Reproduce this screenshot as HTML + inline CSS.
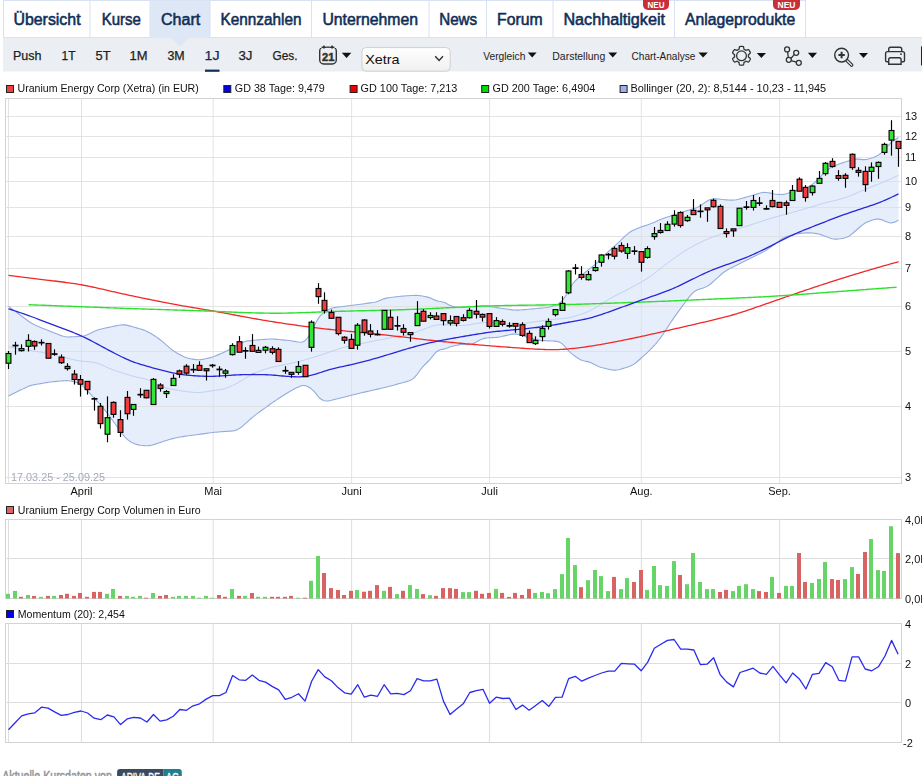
<!DOCTYPE html>
<html><head><meta charset="utf-8"><style>
html,body{margin:0;padding:0;width:922px;height:776px;overflow:hidden;background:#fff;position:relative}
svg{display:block;position:absolute;left:0;top:0;font-family:"Liberation Sans",sans-serif}
#ch{will-change:transform}
</style></head><body>
<svg width="922" height="776" viewBox="0 0 922 776">
<rect x="3" y="0" width="803" height="38" fill="#fff"/>
<line x1="90" y1="0" x2="90" y2="37" stroke="#d8e2f2" stroke-width="1"/>
<line x1="150" y1="0" x2="150" y2="37" stroke="#d8e2f2" stroke-width="1"/>
<rect x="150" y="0" width="60" height="37" fill="#dde7f6"/>
<line x1="210" y1="0" x2="210" y2="37" stroke="#d8e2f2" stroke-width="1"/>
<line x1="311.5" y1="0" x2="311.5" y2="37" stroke="#d8e2f2" stroke-width="1"/>
<line x1="429" y1="0" x2="429" y2="37" stroke="#d8e2f2" stroke-width="1"/>
<line x1="486.5" y1="0" x2="486.5" y2="37" stroke="#d8e2f2" stroke-width="1"/>
<line x1="553" y1="0" x2="553" y2="37" stroke="#d8e2f2" stroke-width="1"/>
<line x1="674.5" y1="0" x2="674.5" y2="37" stroke="#d8e2f2" stroke-width="1"/>
<line x1="805.5" y1="0" x2="805.5" y2="37" stroke="#d8e2f2" stroke-width="1"/>
<line x1="3.5" y1="0" x2="3.5" y2="37" stroke="#d8e2f2" stroke-width="1"/>
<line x1="3" y1="0.5" x2="806" y2="0.5" stroke="#d8e2f2" stroke-width="1"/>
<text x="13.40" y="24.70" font-size="16" font-weight="normal" fill="#0f2e57" text-anchor="start" textLength="67.20" lengthAdjust="spacingAndGlyphs" stroke="#0f2e57" stroke-width="0.55">Übersicht</text>
<text x="101.70" y="24.70" font-size="16" font-weight="normal" fill="#0f2e57" text-anchor="start" textLength="39.10" lengthAdjust="spacingAndGlyphs" stroke="#0f2e57" stroke-width="0.55">Kurse</text>
<text x="161.00" y="24.70" font-size="16" font-weight="normal" fill="#0f2e57" text-anchor="start" textLength="39.20" lengthAdjust="spacingAndGlyphs" stroke="#0f2e57" stroke-width="0.55">Chart</text>
<text x="220.60" y="24.70" font-size="16" font-weight="normal" fill="#0f2e57" text-anchor="start" textLength="80.90" lengthAdjust="spacingAndGlyphs" stroke="#0f2e57" stroke-width="0.55">Kennzahlen</text>
<text x="322.40" y="24.70" font-size="16" font-weight="normal" fill="#0f2e57" text-anchor="start" textLength="95.60" lengthAdjust="spacingAndGlyphs" stroke="#0f2e57" stroke-width="0.55">Unternehmen</text>
<text x="439.20" y="24.70" font-size="16" font-weight="normal" fill="#0f2e57" text-anchor="start" textLength="38.00" lengthAdjust="spacingAndGlyphs" stroke="#0f2e57" stroke-width="0.55">News</text>
<text x="497.10" y="24.70" font-size="16" font-weight="normal" fill="#0f2e57" text-anchor="start" textLength="45.50" lengthAdjust="spacingAndGlyphs" stroke="#0f2e57" stroke-width="0.55">Forum</text>
<text x="563.40" y="24.70" font-size="16" font-weight="normal" fill="#0f2e57" text-anchor="start" textLength="101.60" lengthAdjust="spacingAndGlyphs" stroke="#0f2e57" stroke-width="0.55">Nachhaltigkeit</text>
<text x="685.00" y="24.70" font-size="16" font-weight="normal" fill="#0f2e57" text-anchor="start" textLength="110.20" lengthAdjust="spacingAndGlyphs" stroke="#0f2e57" stroke-width="0.55">Anlageprodukte</text>
<path d="M643 0 H669 V5 A5 5 0 0 1 664 10 H648 A5 5 0 0 1 643 5 Z" fill="#c92f3a"/>
<text x="656.00" y="7.60" font-size="9" font-weight="bold" fill="#fff" text-anchor="middle" textLength="17.00" lengthAdjust="spacingAndGlyphs">NEU</text>
<path d="M773 0 H800 V5 A5 5 0 0 1 795 10 H778 A5 5 0 0 1 773 5 Z" fill="#c92f3a"/>
<text x="786.50" y="7.60" font-size="9" font-weight="bold" fill="#fff" text-anchor="middle" textLength="18.00" lengthAdjust="spacingAndGlyphs">NEU</text>
<rect x="3" y="37" width="919" height="34.5" fill="#ebeef2"/>
<line x1="3" y1="37.5" x2="922" y2="37.5" stroke="#d8e2f2" stroke-width="1"/>
<rect x="150.5" y="37" width="59" height="1" fill="#dde7f6"/>
<polygon points="171,37.5 189,37.5 180,46.5" fill="#dde7f6"/>
<text x="12.90" y="59.80" font-size="12.8" font-weight="normal" fill="#1d1d1d" text-anchor="start" textLength="28.60" lengthAdjust="spacingAndGlyphs" stroke="#1d1d1d" stroke-width="0.25">Push</text>
<text x="61.50" y="59.80" font-size="12.8" font-weight="normal" fill="#1d1d1d" text-anchor="start" textLength="14.00" lengthAdjust="spacingAndGlyphs" stroke="#1d1d1d" stroke-width="0.25">1T</text>
<text x="95.50" y="59.80" font-size="12.8" font-weight="normal" fill="#1d1d1d" text-anchor="start" textLength="15.00" lengthAdjust="spacingAndGlyphs" stroke="#1d1d1d" stroke-width="0.25">5T</text>
<text x="129.50" y="59.80" font-size="12.8" font-weight="normal" fill="#1d1d1d" text-anchor="start" textLength="18.00" lengthAdjust="spacingAndGlyphs" stroke="#1d1d1d" stroke-width="0.25">1M</text>
<text x="167.40" y="59.80" font-size="12.8" font-weight="normal" fill="#1d1d1d" text-anchor="start" textLength="17.30" lengthAdjust="spacingAndGlyphs" stroke="#1d1d1d" stroke-width="0.25">3M</text>
<text x="204.50" y="59.80" font-size="12.8" font-weight="normal" fill="#0f2e57" text-anchor="start" textLength="15.00" lengthAdjust="spacingAndGlyphs" stroke="#0f2e57" stroke-width="0.25">1J</text>
<text x="238.50" y="59.80" font-size="12.8" font-weight="normal" fill="#1d1d1d" text-anchor="start" textLength="14.00" lengthAdjust="spacingAndGlyphs" stroke="#1d1d1d" stroke-width="0.25">3J</text>
<text x="272.50" y="59.80" font-size="12.8" font-weight="normal" fill="#1d1d1d" text-anchor="start" textLength="25.00" lengthAdjust="spacingAndGlyphs" stroke="#1d1d1d" stroke-width="0.25">Ges.</text>
<rect x="205" y="69.6" width="14.5" height="2.2" fill="#0f2e57"/>
<rect x="319.7" y="47" width="16.6" height="17" rx="4" fill="none" stroke="#333" stroke-width="1.4"/>
<rect x="319" y="45" width="18" height="3" fill="#ebeef2"/>
<path d="M321.5 47.3 H334.5" stroke="#333" stroke-width="1.4" fill="none"/>
<rect x="323" y="45.6" width="1.8" height="3" rx="0.6" fill="#333"/>
<rect x="331.2" y="45.6" width="1.8" height="3" rx="0.6" fill="#333"/>
<rect x="326" y="46.6" width="4" height="1.4" fill="#ebeef2"/>
<path d="M326.2 47.3 H329.8" stroke="#333" stroke-width="1.2"/>
<text x="328.20" y="60.80" font-size="11" font-weight="bold" fill="#333" text-anchor="middle" textLength="12.40" lengthAdjust="spacingAndGlyphs" stroke="#333" stroke-width="0.5">21</text>
<polygon points="341.8,52.8 351.3,52.8 346.55,58" fill="#111"/>
<defs><linearGradient id="sg" x1="0" y1="0" x2="0" y2="1"><stop offset="0" stop-color="#ffffff"/><stop offset="1" stop-color="#f0f0f0"/></linearGradient></defs>
<rect x="361.9" y="47.6" width="88.3" height="23.6" rx="4" fill="url(#sg)" stroke="#cfcfcf" stroke-width="1"/>
<text x="365.20" y="63.70" font-size="13.6" font-weight="normal" fill="#111" text-anchor="start" textLength="34.40" lengthAdjust="spacingAndGlyphs">Xetra</text>
<path d="M435.2 56.3 L439.1 60.4 L443 56.3" fill="none" stroke="#333" stroke-width="1.5"/>
<text x="483.20" y="59.50" font-size="11.8" font-weight="normal" fill="#1d1d1d" text-anchor="start" textLength="42.20" lengthAdjust="spacingAndGlyphs">Vergleich</text>
<polygon points="527.8,52.4 536.6,52.4 532.2,57.6" fill="#111"/>
<text x="552.30" y="59.50" font-size="11.8" font-weight="normal" fill="#1d1d1d" text-anchor="start" textLength="52.90" lengthAdjust="spacingAndGlyphs">Darstellung</text>
<polygon points="608.3,52.4 617.2,52.4 612.75,57.6" fill="#111"/>
<text x="631.50" y="59.50" font-size="11.8" font-weight="normal" fill="#1d1d1d" text-anchor="start" textLength="63.90" lengthAdjust="spacingAndGlyphs">Chart-Analyse</text>
<polygon points="698.4,52.4 707.8,52.4 703.0999999999999,57.6" fill="#111"/>
<path d="M741.50 46.40 L741.75 46.40 L741.99 46.41 L742.24 46.43 L742.48 46.45 L742.73 46.48 L742.97 46.52 L743.21 46.56 L743.44 46.69 L743.58 47.13 L743.70 47.59 L743.80 48.05 L743.87 48.49 L743.94 48.92 L744.01 49.26 L744.18 49.33 L744.35 49.41 L744.51 49.48 L744.68 49.56 L744.84 49.65 L745.00 49.74 L745.16 49.83 L745.31 49.93 L745.46 50.03 L745.61 50.14 L745.76 50.25 L745.91 50.36 L746.24 50.25 L746.64 50.09 L747.07 49.93 L747.51 49.79 L747.97 49.66 L748.42 49.57 L748.65 49.70 L748.81 49.88 L748.96 50.08 L749.10 50.27 L749.25 50.48 L749.38 50.68 L749.51 50.89 L749.64 51.10 L749.76 51.31 L749.88 51.53 L749.98 51.75 L750.09 51.98 L750.18 52.20 L750.28 52.43 L750.36 52.66 L750.36 52.92 L750.05 53.27 L749.71 53.60 L749.36 53.91 L749.02 54.20 L748.68 54.47 L748.41 54.70 L748.44 54.89 L748.46 55.07 L748.48 55.25 L748.49 55.43 L748.50 55.62 L748.50 55.80 L748.50 55.98 L748.49 56.17 L748.48 56.35 L748.46 56.53 L748.44 56.71 L748.41 56.90 L748.68 57.13 L749.02 57.40 L749.36 57.69 L749.71 58.00 L750.05 58.33 L750.36 58.68 L750.36 58.94 L750.28 59.17 L750.18 59.40 L750.09 59.62 L749.98 59.85 L749.88 60.07 L749.76 60.29 L749.64 60.50 L749.51 60.71 L749.38 60.92 L749.25 61.12 L749.10 61.33 L748.96 61.52 L748.81 61.72 L748.65 61.90 L748.42 62.03 L747.97 61.94 L747.51 61.81 L747.07 61.67 L746.64 61.51 L746.24 61.35 L745.91 61.24 L745.76 61.35 L745.61 61.46 L745.46 61.57 L745.31 61.67 L745.16 61.77 L745.00 61.86 L744.84 61.95 L744.68 62.04 L744.51 62.12 L744.35 62.19 L744.18 62.27 L744.01 62.34 L743.94 62.68 L743.87 63.11 L743.80 63.55 L743.70 64.01 L743.58 64.47 L743.44 64.91 L743.21 65.04 L742.97 65.08 L742.73 65.12 L742.48 65.15 L742.24 65.17 L741.99 65.19 L741.75 65.20 L741.50 65.20 L741.25 65.20 L741.01 65.19 L740.76 65.17 L740.52 65.15 L740.27 65.12 L740.03 65.08 L739.79 65.04 L739.56 64.91 L739.42 64.47 L739.30 64.01 L739.20 63.55 L739.13 63.11 L739.06 62.68 L738.99 62.34 L738.82 62.27 L738.65 62.19 L738.49 62.12 L738.32 62.04 L738.16 61.95 L738.00 61.86 L737.84 61.77 L737.69 61.67 L737.54 61.57 L737.39 61.46 L737.24 61.35 L737.09 61.24 L736.76 61.35 L736.36 61.51 L735.93 61.67 L735.49 61.81 L735.03 61.94 L734.58 62.03 L734.35 61.90 L734.19 61.72 L734.04 61.52 L733.90 61.33 L733.75 61.12 L733.62 60.92 L733.49 60.71 L733.36 60.50 L733.24 60.29 L733.12 60.07 L733.02 59.85 L732.91 59.62 L732.82 59.40 L732.72 59.17 L732.64 58.94 L732.64 58.68 L732.95 58.33 L733.29 58.00 L733.64 57.69 L733.98 57.40 L734.32 57.13 L734.59 56.90 L734.56 56.71 L734.54 56.53 L734.52 56.35 L734.51 56.17 L734.50 55.98 L734.50 55.80 L734.50 55.62 L734.51 55.43 L734.52 55.25 L734.54 55.07 L734.56 54.89 L734.59 54.70 L734.32 54.47 L733.98 54.20 L733.64 53.91 L733.29 53.60 L732.95 53.27 L732.64 52.92 L732.64 52.66 L732.72 52.43 L732.82 52.20 L732.91 51.98 L733.02 51.75 L733.12 51.53 L733.24 51.31 L733.36 51.10 L733.49 50.89 L733.62 50.68 L733.75 50.48 L733.90 50.27 L734.04 50.08 L734.19 49.88 L734.35 49.70 L734.58 49.57 L735.03 49.66 L735.49 49.79 L735.93 49.93 L736.36 50.09 L736.76 50.25 L737.09 50.36 L737.24 50.25 L737.39 50.14 L737.54 50.03 L737.69 49.93 L737.84 49.83 L738.00 49.74 L738.16 49.65 L738.32 49.56 L738.49 49.48 L738.65 49.41 L738.82 49.33 L738.99 49.26 L739.06 48.92 L739.13 48.49 L739.20 48.05 L739.30 47.59 L739.42 47.13 L739.56 46.69 L739.79 46.56 L740.03 46.52 L740.27 46.48 L740.52 46.45 L740.76 46.43 L741.01 46.41 L741.25 46.40 L741.50 46.40Z" fill="none" stroke="#333" stroke-width="1.3" stroke-linejoin="round"/>
<circle cx="741.5" cy="55.8" r="4.9" fill="none" stroke="#333" stroke-width="1.3"/>
<polygon points="756.8,52.9 766,52.9 761.4,58" fill="#111"/>
<circle cx="787.1" cy="49.4" r="2.5" fill="none" stroke="#333" stroke-width="1.3"/>
<circle cx="796.2" cy="52.8" r="2.5" fill="none" stroke="#333" stroke-width="1.3"/>
<circle cx="788.8" cy="59.8" r="2.5" fill="none" stroke="#333" stroke-width="1.3"/>
<circle cx="798.8" cy="62.8" r="2.5" fill="none" stroke="#333" stroke-width="1.3"/>
<path d="M787.6 51.9 L788.3 57.3 M790.9 58.5 L794.2 54.6 M791.2 60.6 L796.4 62.1" stroke="#333" stroke-width="1.3" fill="none"/>
<polygon points="807.9,52.8 817,52.8 812.45,58" fill="#111"/>
<circle cx="841.6" cy="55.1" r="6.9" fill="none" stroke="#333" stroke-width="1.4"/>
<path d="M838.4 55 H844.8 M841.6 51.8 V58.2" stroke="#333" stroke-width="2"/>
<path d="M847.2 60.8 L851.6 65" stroke="#333" stroke-width="3.6" stroke-linecap="round"/>
<path d="M847.2 60.8 L851.6 65" stroke="#ebeef2" stroke-width="1.2" stroke-linecap="round"/>
<polygon points="859,53 868,53 863.5,57.9" fill="#111"/>
<path d="M888.7 51.4 V49.2 Q888.7 47.3 890.6 47.3 H899.8 Q901.7 47.3 901.7 49.2 V51.4" fill="none" stroke="#333" stroke-width="1.4"/>
<path d="M888.3 61.8 H886.9 Q885.6 61.8 885.6 60.4 V53.6 Q885.6 51.6 887.6 51.6 H902.6 Q904.5 51.6 904.5 53.6 V60.4 Q904.5 61.8 903.2 61.8 H901.5" fill="none" stroke="#333" stroke-width="1.4"/>
<path d="M888.7 64.2 V59.6 Q888.7 57.7 890.6 57.7 H899.2 Q901.1 57.7 901.1 59.6 V64.2 H888.7 Z" fill="none" stroke="#333" stroke-width="1.4"/>
<circle cx="901" cy="54.2" r="0.9" fill="#333"/>
<rect x="921" y="46.4" width="1" height="19" fill="#222"/>
<text x="2.20" y="781.20" font-size="14" font-weight="normal" fill="#8f9499" text-anchor="start" textLength="109.80" lengthAdjust="spacingAndGlyphs" stroke="#8f9499" stroke-width="0.5">Aktuelle Kursdaten von</text>
<path d="M117.1 776 V772 Q117.1 769.1 120 769.1 H163.6 V776 Z" fill="#3b4b5f"/>
<path d="M163.6 776 V769.1 H178.9 Q181.8 769.1 181.8 772 V776 Z" fill="#1f7f8c"/>
<text x="121.00" y="782.00" font-size="12.5" font-weight="normal" fill="#fff" text-anchor="start" textLength="39.00" lengthAdjust="spacingAndGlyphs" stroke="#fff" stroke-width="0.4">ARIVA.DE</text>
<text x="166.00" y="782.00" font-size="12.5" font-weight="normal" fill="#fff" text-anchor="start" textLength="13.00" lengthAdjust="spacingAndGlyphs" stroke="#fff" stroke-width="0.4">AG</text>
</svg>
<svg id="ch" width="922" height="776" viewBox="0 0 922 776">
<rect x="6.5" y="85.5" width="7" height="7" fill="#ee4040" stroke="#222" stroke-width="1"/>
<text x="17.50" y="91.70" font-size="11" font-weight="normal" fill="#111" text-anchor="start" textLength="181.30" lengthAdjust="spacingAndGlyphs">Uranium Energy Corp (Xetra) (in EUR)</text>
<rect x="223.8" y="85.5" width="7" height="7" fill="#0000ee" stroke="#222" stroke-width="1"/>
<text x="234.80" y="91.70" font-size="11" font-weight="normal" fill="#111" text-anchor="start" textLength="90.00" lengthAdjust="spacingAndGlyphs">GD 38 Tage: 9,479</text>
<rect x="350.1" y="85.5" width="7" height="7" fill="#ee0000" stroke="#222" stroke-width="1"/>
<text x="360.60" y="91.70" font-size="11" font-weight="normal" fill="#111" text-anchor="start" textLength="96.80" lengthAdjust="spacingAndGlyphs">GD 100 Tage: 7,213</text>
<rect x="481.7" y="85.5" width="7" height="7" fill="#00dd00" stroke="#222" stroke-width="1"/>
<text x="492.60" y="91.70" font-size="11" font-weight="normal" fill="#111" text-anchor="start" textLength="102.60" lengthAdjust="spacingAndGlyphs">GD 200 Tage: 6,4904</text>
<rect x="620.1" y="85.5" width="7" height="7" fill="#99b3e6" stroke="#222" stroke-width="1"/>
<text x="630.40" y="91.70" font-size="11" font-weight="normal" fill="#111" text-anchor="start" textLength="195.80" lengthAdjust="spacingAndGlyphs">Bollinger (20, 2): 8,5144 - 10,23 - 11,945</text>
<rect x="5.5" y="98.5" width="896.0" height="385" fill="#fff"/>
<path d="M8.50 306.37 L10.50 307.86 L12.50 309.34 L14.50 310.83 L16.50 312.31 L18.50 313.80 L20.50 315.29 L22.50 316.77 L24.50 318.26 L26.50 319.74 L28.50 321.19 L30.50 322.57 L32.50 323.81 L34.50 324.86 L36.50 325.76 L38.50 326.59 L40.50 327.40 L42.50 328.20 L44.50 329.00 L46.50 329.80 L48.50 330.60 L50.50 331.40 L52.50 332.20 L54.50 333.00 L56.50 333.80 L58.50 334.59 L60.50 335.36 L62.50 336.05 L64.50 336.57 L66.50 336.86 L68.50 336.94 L70.50 336.90 L72.50 336.82 L74.50 336.72 L76.50 336.61 L78.50 336.50 L80.50 336.37 L82.50 336.13 L84.50 335.71 L86.50 335.05 L88.50 334.20 L90.50 333.24 L92.50 332.27 L94.50 331.32 L96.50 330.46 L98.50 329.75 L100.50 329.17 L102.50 328.69 L104.50 328.25 L106.50 327.82 L108.50 327.40 L110.50 326.98 L112.50 326.56 L114.50 326.14 L116.50 325.72 L118.50 325.32 L120.50 324.99 L122.50 324.80 L124.50 324.85 L126.50 325.14 L128.50 325.61 L130.50 326.15 L132.50 326.72 L134.50 327.29 L136.50 327.87 L138.50 328.44 L140.50 329.02 L142.50 329.62 L144.50 330.31 L146.50 331.15 L148.50 332.16 L150.50 333.33 L152.50 334.56 L154.50 335.83 L156.50 337.13 L158.50 338.51 L160.50 340.01 L162.50 341.64 L164.50 343.37 L166.50 345.15 L168.50 346.92 L170.50 348.63 L172.50 350.20 L174.50 351.59 L176.50 352.82 L178.50 353.95 L180.50 355.02 L182.50 356.05 L184.50 356.97 L186.50 357.73 L188.50 358.30 L190.50 358.73 L192.50 359.09 L194.50 359.41 L196.50 359.65 L198.50 359.75 L200.50 359.65 L202.50 359.38 L204.50 359.00 L206.50 358.58 L208.50 358.12 L210.50 357.60 L212.50 356.98 L214.50 356.26 L216.50 355.46 L218.50 354.62 L220.50 353.77 L222.50 352.91 L224.50 352.02 L226.50 351.08 L228.50 350.06 L230.50 348.98 L232.50 347.86 L234.50 346.72 L236.50 345.58 L238.50 344.46 L240.50 343.38 L242.50 342.42 L244.50 341.68 L246.50 341.16 L248.50 340.83 L250.50 340.59 L252.50 340.40 L254.50 340.22 L256.50 340.04 L258.50 339.87 L260.50 339.70 L262.50 339.53 L264.50 339.36 L266.50 339.20 L268.50 339.07 L270.50 339.02 L272.50 339.05 L274.50 339.16 L276.50 339.33 L278.50 339.51 L280.50 339.70 L282.50 339.89 L284.50 340.08 L286.50 340.28 L288.50 340.50 L290.50 340.75 L292.50 341.04 L294.50 341.36 L296.50 341.68 L298.50 341.99 L300.50 342.19 L302.50 342.03 L304.50 341.12 L306.50 339.21 L308.50 336.39 L310.50 332.98 L312.50 329.25 L314.50 325.35 L316.50 321.50 L318.50 318.11 L320.50 315.48 L322.50 313.59 L324.50 312.15 L326.50 310.91 L328.50 309.79 L330.50 308.82 L332.50 308.09 L334.50 307.59 L336.50 307.25 L338.50 306.99 L340.50 306.74 L342.50 306.51 L344.50 306.27 L346.50 306.03 L348.50 305.79 L350.50 305.54 L352.50 305.29 L354.50 305.03 L356.50 304.76 L358.50 304.49 L360.50 304.22 L362.50 303.95 L364.50 303.68 L366.50 303.41 L368.50 303.14 L370.50 302.87 L372.50 302.57 L374.50 302.21 L376.50 301.69 L378.50 300.99 L380.50 300.15 L382.50 299.32 L384.50 298.63 L386.50 298.13 L388.50 297.78 L390.50 297.50 L392.50 297.25 L394.50 297.00 L396.50 296.76 L398.50 296.53 L400.50 296.31 L402.50 296.13 L404.50 295.97 L406.50 295.82 L408.50 295.68 L410.50 295.55 L412.50 295.43 L414.50 295.35 L416.50 295.37 L418.50 295.51 L420.50 295.76 L422.50 296.08 L424.50 296.44 L426.50 296.85 L428.50 297.38 L430.50 298.08 L432.50 298.95 L434.50 299.87 L436.50 300.65 L438.50 301.18 L440.50 301.53 L442.50 301.93 L444.50 302.59 L446.50 303.56 L448.50 304.66 L450.50 305.62 L452.50 306.33 L454.50 306.81 L456.50 307.15 L458.50 307.39 L460.50 307.50 L462.50 307.48 L464.50 307.36 L466.50 307.20 L468.50 307.02 L470.50 306.83 L472.50 306.65 L474.50 306.47 L476.50 306.28 L478.50 306.10 L480.50 305.94 L482.50 305.84 L484.50 305.86 L486.50 306.04 L488.50 306.34 L490.50 306.69 L492.50 307.02 L494.50 307.33 L496.50 307.62 L498.50 307.91 L500.50 308.19 L502.50 308.48 L504.50 308.76 L506.50 309.05 L508.50 309.33 L510.50 309.61 L512.50 309.86 L514.50 310.05 L516.50 310.13 L518.50 310.09 L520.50 309.97 L522.50 309.80 L524.50 309.62 L526.50 309.43 L528.50 309.25 L530.50 309.06 L532.50 308.88 L534.50 308.69 L536.50 308.51 L538.50 308.32 L540.50 308.14 L542.50 307.95 L544.50 307.76 L546.50 307.52 L548.50 307.20 L550.50 306.76 L552.50 306.18 L554.50 305.51 L556.50 304.73 L558.50 303.72 L560.50 302.30 L562.50 300.27 L564.50 297.63 L566.50 294.47 L568.50 290.97 L570.50 287.42 L572.50 284.26 L574.50 281.71 L576.50 279.65 L578.50 277.83 L580.50 276.10 L582.50 274.43 L584.50 272.81 L586.50 271.23 L588.50 269.68 L590.50 268.13 L592.50 266.54 L594.50 264.85 L596.50 263.04 L598.50 261.13 L600.50 259.15 L602.50 257.16 L604.50 255.20 L606.50 253.30 L608.50 251.48 L610.50 249.71 L612.50 247.96 L614.50 246.21 L616.50 244.42 L618.50 242.57 L620.50 240.66 L622.50 238.69 L624.50 236.73 L626.50 234.84 L628.50 233.14 L630.50 231.72 L632.50 230.59 L634.50 229.66 L636.50 228.83 L638.50 228.03 L640.50 227.27 L642.50 226.55 L644.50 225.86 L646.50 225.18 L648.50 224.49 L650.50 223.77 L652.50 222.99 L654.50 222.14 L656.50 221.26 L658.50 220.36 L660.50 219.49 L662.50 218.68 L664.50 217.95 L666.50 217.29 L668.50 216.67 L670.50 216.07 L672.50 215.46 L674.50 214.83 L676.50 214.17 L678.50 213.48 L680.50 212.79 L682.50 212.09 L684.50 211.41 L686.50 210.77 L688.50 210.17 L690.50 209.61 L692.50 209.05 L694.50 208.45 L696.50 207.73 L698.50 206.79 L700.50 205.61 L702.50 204.27 L704.50 202.86 L706.50 201.51 L708.50 200.33 L710.50 199.45 L712.50 198.93 L714.50 198.75 L716.50 198.82 L718.50 199.03 L720.50 199.27 L722.50 199.49 L724.50 199.68 L726.50 199.85 L728.50 200.02 L730.50 200.14 L732.50 200.16 L734.50 200.02 L736.50 199.70 L738.50 199.24 L740.50 198.72 L742.50 198.18 L744.50 197.63 L746.50 197.07 L748.50 196.50 L750.50 195.92 L752.50 195.32 L754.50 194.71 L756.50 194.10 L758.50 193.51 L760.50 192.97 L762.50 192.56 L764.50 192.40 L766.50 192.49 L768.50 192.77 L770.50 193.15 L772.50 193.55 L774.50 193.93 L776.50 194.23 L778.50 194.40 L780.50 194.44 L782.50 194.34 L784.50 194.12 L786.50 193.71 L788.50 193.08 L790.50 192.28 L792.50 191.50 L794.50 190.91 L796.50 190.60 L798.50 190.42 L800.50 190.12 L802.50 189.54 L804.50 188.73 L806.50 187.79 L808.50 186.77 L810.50 185.64 L812.50 184.30 L814.50 182.67 L816.50 180.78 L818.50 178.74 L820.50 176.64 L822.50 174.58 L824.50 172.61 L826.50 170.80 L828.50 169.21 L830.50 167.84 L832.50 166.69 L834.50 165.76 L836.50 164.97 L838.50 164.25 L840.50 163.56 L842.50 162.88 L844.50 162.22 L846.50 161.58 L848.50 160.96 L850.50 160.36 L852.50 159.81 L854.50 159.35 L856.50 159.11 L858.50 159.13 L860.50 159.35 L862.50 159.58 L864.50 159.65 L866.50 159.44 L868.50 158.97 L870.50 158.35 L872.50 157.66 L874.50 156.89 L876.50 156.01 L878.50 154.93 L880.50 153.57 L882.50 151.83 L884.50 149.71 L886.50 147.38 L888.50 145.09 L890.50 143.08 L892.50 141.43 L894.50 140.04 L896.50 138.78 L898.50 137.56 L898.50 220.25 L896.50 221.26 L894.50 222.15 L892.50 222.75 L890.50 222.89 L888.50 222.53 L886.50 221.83 L884.50 220.96 L882.50 220.10 L880.50 219.40 L878.50 219.03 L876.50 219.09 L874.50 219.49 L872.50 220.06 L870.50 220.71 L868.50 221.42 L866.50 222.30 L864.50 223.45 L862.50 224.90 L860.50 226.54 L858.50 228.27 L856.50 230.03 L854.50 231.78 L852.50 233.49 L850.50 235.08 L848.50 236.40 L846.50 237.35 L844.50 237.96 L842.50 238.37 L840.50 238.69 L838.50 238.96 L836.50 239.13 L834.50 239.11 L832.50 238.82 L830.50 238.27 L828.50 237.57 L826.50 236.80 L824.50 236.02 L822.50 235.28 L820.50 234.62 L818.50 234.08 L816.50 233.66 L814.50 233.33 L812.50 233.06 L810.50 232.89 L808.50 232.84 L806.50 232.88 L804.50 232.99 L802.50 233.14 L800.50 233.33 L798.50 233.60 L796.50 233.97 L794.50 234.41 L792.50 234.89 L790.50 235.39 L788.50 235.93 L786.50 236.58 L784.50 237.43 L782.50 238.55 L780.50 239.88 L778.50 241.33 L776.50 242.81 L774.50 244.31 L772.50 245.80 L770.50 247.26 L768.50 248.66 L766.50 249.95 L764.50 251.11 L762.50 252.18 L760.50 253.20 L758.50 254.20 L756.50 255.20 L754.50 256.20 L752.50 257.20 L750.50 258.20 L748.50 259.20 L746.50 260.20 L744.50 261.20 L742.50 262.20 L740.50 263.21 L738.50 264.21 L736.50 265.21 L734.50 266.22 L732.50 267.23 L730.50 268.24 L728.50 269.29 L726.50 270.43 L724.50 271.75 L722.50 273.29 L720.50 275.00 L718.50 276.80 L716.50 278.63 L714.50 280.46 L712.50 282.26 L710.50 283.95 L708.50 285.44 L706.50 286.62 L704.50 287.51 L702.50 288.22 L700.50 288.85 L698.50 289.51 L696.50 290.32 L694.50 291.49 L692.50 293.17 L690.50 295.35 L688.50 297.86 L686.50 300.52 L684.50 303.22 L682.50 305.92 L680.50 308.63 L678.50 311.35 L676.50 314.10 L674.50 316.92 L672.50 319.82 L670.50 322.81 L668.50 325.86 L666.50 328.93 L664.50 331.98 L662.50 334.98 L660.50 337.85 L658.50 340.51 L656.50 342.96 L654.50 345.24 L652.50 347.41 L650.50 349.47 L648.50 351.43 L646.50 353.29 L644.50 355.12 L642.50 356.93 L640.50 358.73 L638.50 360.52 L636.50 362.25 L634.50 363.82 L632.50 365.11 L630.50 366.09 L628.50 366.84 L626.50 367.47 L624.50 368.07 L622.50 368.65 L620.50 369.22 L618.50 369.72 L616.50 370.06 L614.50 370.16 L612.50 369.99 L610.50 369.64 L608.50 369.20 L606.50 368.72 L604.50 368.24 L602.50 367.74 L600.50 367.19 L598.50 366.50 L596.50 365.62 L594.50 364.59 L592.50 363.52 L590.50 362.58 L588.50 361.86 L586.50 361.35 L584.50 360.93 L582.50 360.42 L580.50 359.65 L578.50 358.54 L576.50 357.21 L574.50 355.81 L572.50 354.34 L570.50 352.67 L568.50 350.69 L566.50 348.45 L564.50 346.17 L562.50 344.14 L560.50 342.65 L558.50 341.78 L556.50 341.36 L554.50 341.17 L552.50 341.06 L550.50 340.95 L548.50 340.85 L546.50 340.74 L544.50 340.64 L542.50 340.51 L540.50 340.35 L538.50 340.09 L536.50 339.70 L534.50 339.21 L532.50 338.64 L530.50 338.05 L528.50 337.45 L526.50 336.85 L524.50 336.25 L522.50 335.65 L520.50 335.07 L518.50 334.55 L516.50 334.17 L514.50 334.03 L512.50 334.17 L510.50 334.50 L508.50 334.94 L506.50 335.40 L504.50 335.87 L502.50 336.33 L500.50 336.75 L498.50 337.10 L496.50 337.35 L494.50 337.51 L492.50 337.62 L490.50 337.71 L488.50 337.82 L486.50 338.00 L484.50 338.35 L482.50 338.93 L480.50 339.76 L478.50 340.77 L476.50 341.84 L474.50 342.90 L472.50 343.83 L470.50 344.47 L468.50 344.73 L466.50 344.66 L464.50 344.48 L462.50 344.40 L460.50 344.53 L458.50 344.84 L456.50 345.25 L454.50 345.71 L452.50 346.23 L450.50 346.83 L448.50 347.54 L446.50 348.28 L444.50 348.91 L442.50 349.37 L440.50 349.78 L438.50 350.48 L436.50 351.80 L434.50 353.83 L432.50 356.30 L430.50 358.78 L428.50 361.00 L426.50 363.00 L424.50 364.99 L422.50 367.21 L420.50 369.76 L418.50 372.50 L416.50 375.17 L414.50 377.47 L412.50 379.17 L410.50 380.30 L408.50 381.05 L406.50 381.65 L404.50 382.20 L402.50 382.75 L400.50 383.29 L398.50 383.83 L396.50 384.38 L394.50 384.92 L392.50 385.46 L390.50 386.00 L388.50 386.52 L386.50 387.02 L384.50 387.50 L382.50 387.97 L380.50 388.43 L378.50 388.89 L376.50 389.35 L374.50 389.81 L372.50 390.27 L370.50 390.73 L368.50 391.19 L366.50 391.65 L364.50 392.11 L362.50 392.57 L360.50 393.04 L358.50 393.50 L356.50 393.97 L354.50 394.45 L352.50 394.95 L350.50 395.46 L348.50 395.97 L346.50 396.48 L344.50 397.00 L342.50 397.51 L340.50 398.02 L338.50 398.54 L336.50 399.05 L334.50 399.57 L332.50 400.07 L330.50 400.55 L328.50 400.91 L326.50 401.03 L324.50 400.78 L322.50 400.04 L320.50 398.72 L318.50 396.77 L316.50 394.34 L314.50 391.89 L312.50 389.80 L310.50 388.19 L308.50 386.94 L306.50 386.01 L304.50 385.51 L302.50 385.56 L300.50 386.08 L298.50 386.90 L296.50 387.84 L294.50 388.84 L292.50 389.90 L290.50 391.03 L288.50 392.23 L286.50 393.47 L284.50 394.72 L282.50 395.99 L280.50 397.25 L278.50 398.54 L276.50 399.87 L274.50 401.23 L272.50 402.64 L270.50 404.06 L268.50 405.49 L266.50 406.92 L264.50 408.35 L262.50 409.78 L260.50 411.21 L258.50 412.65 L256.50 414.13 L254.50 415.66 L252.50 417.30 L250.50 419.01 L248.50 420.79 L246.50 422.58 L244.50 424.37 L242.50 426.13 L240.50 427.76 L238.50 429.11 L236.50 430.06 L234.50 430.62 L232.50 430.91 L230.50 431.09 L228.50 431.24 L226.50 431.38 L224.50 431.52 L222.50 431.66 L220.50 431.80 L218.50 431.95 L216.50 432.12 L214.50 432.31 L212.50 432.54 L210.50 432.79 L208.50 433.06 L206.50 433.34 L204.50 433.61 L202.50 433.88 L200.50 434.16 L198.50 434.43 L196.50 434.70 L194.50 434.98 L192.50 435.25 L190.50 435.53 L188.50 435.80 L186.50 436.07 L184.50 436.35 L182.50 436.64 L180.50 436.95 L178.50 437.31 L176.50 437.72 L174.50 438.17 L172.50 438.65 L170.50 439.18 L168.50 439.77 L166.50 440.40 L164.50 441.06 L162.50 441.73 L160.50 442.40 L158.50 443.07 L156.50 443.74 L154.50 444.37 L152.50 444.93 L150.50 445.36 L148.50 445.61 L146.50 445.68 L144.50 445.62 L142.50 445.45 L140.50 445.21 L138.50 444.88 L136.50 444.39 L134.50 443.73 L132.50 442.87 L130.50 441.77 L128.50 440.38 L126.50 438.64 L124.50 436.52 L122.50 434.06 L120.50 431.37 L118.50 428.57 L116.50 425.76 L114.50 422.97 L112.50 420.22 L110.50 417.49 L108.50 414.81 L106.50 412.19 L104.50 409.65 L102.50 407.21 L100.50 404.87 L98.50 402.65 L96.50 400.51 L94.50 398.40 L92.50 396.28 L90.50 394.13 L88.50 391.93 L86.50 389.71 L84.50 387.56 L82.50 385.65 L80.50 384.15 L78.50 383.11 L76.50 382.40 L74.50 381.86 L72.50 381.40 L70.50 381.01 L68.50 380.74 L66.50 380.64 L64.50 380.69 L62.50 380.83 L60.50 381.01 L58.50 381.20 L56.50 381.39 L54.50 381.58 L52.50 381.79 L50.50 382.03 L48.50 382.30 L46.50 382.61 L44.50 382.94 L42.50 383.28 L40.50 383.62 L38.50 383.95 L36.50 384.30 L34.50 384.66 L32.50 385.08 L30.50 385.63 L28.50 386.34 L26.50 387.19 L24.50 388.14 L22.50 389.12 L20.50 390.11 L18.50 391.10 L16.50 392.09 L14.50 393.08 L12.50 394.07 L10.50 395.06 L8.50 396.05Z" fill="#e7eefb" stroke="none"/>
<rect x="5.5" y="98.5" width="896.0" height="385.0" fill="none" stroke="#d3d3d3" stroke-width="1"/>
<line x1="5.5" y1="116.5" x2="901.5" y2="116.5" stroke="#dedede" stroke-opacity="0.85" stroke-width="1"/>
<line x1="5.5" y1="136.5" x2="901.5" y2="136.5" stroke="#dedede" stroke-opacity="0.85" stroke-width="1"/>
<line x1="5.5" y1="157.5" x2="901.5" y2="157.5" stroke="#dedede" stroke-opacity="0.85" stroke-width="1"/>
<line x1="5.5" y1="181.5" x2="901.5" y2="181.5" stroke="#dedede" stroke-opacity="0.85" stroke-width="1"/>
<line x1="5.5" y1="207.5" x2="901.5" y2="207.5" stroke="#dedede" stroke-opacity="0.85" stroke-width="1"/>
<line x1="5.5" y1="236.5" x2="901.5" y2="236.5" stroke="#dedede" stroke-opacity="0.85" stroke-width="1"/>
<line x1="5.5" y1="268.5" x2="901.5" y2="268.5" stroke="#dedede" stroke-opacity="0.85" stroke-width="1"/>
<line x1="5.5" y1="306.5" x2="901.5" y2="306.5" stroke="#dedede" stroke-opacity="0.85" stroke-width="1"/>
<line x1="5.5" y1="351.5" x2="901.5" y2="351.5" stroke="#dedede" stroke-opacity="0.85" stroke-width="1"/>
<line x1="5.5" y1="406.5" x2="901.5" y2="406.5" stroke="#dedede" stroke-opacity="0.85" stroke-width="1"/>
<line x1="5.5" y1="477.5" x2="901.5" y2="477.5" stroke="#dedede" stroke-opacity="0.85" stroke-width="1"/>
<line x1="8.5" y1="98.5" x2="8.5" y2="483.5" stroke="#dedede" stroke-opacity="0.85" stroke-width="1"/>
<line x1="81.5" y1="98.5" x2="81.5" y2="483.5" stroke="#dedede" stroke-opacity="0.85" stroke-width="1"/>
<line x1="213.2" y1="98.5" x2="213.2" y2="483.5" stroke="#dedede" stroke-opacity="0.85" stroke-width="1"/>
<line x1="351.6" y1="98.5" x2="351.6" y2="483.5" stroke="#dedede" stroke-opacity="0.85" stroke-width="1"/>
<line x1="489.6" y1="98.5" x2="489.6" y2="483.5" stroke="#dedede" stroke-opacity="0.85" stroke-width="1"/>
<line x1="641.3" y1="98.5" x2="641.3" y2="483.5" stroke="#dedede" stroke-opacity="0.85" stroke-width="1"/>
<line x1="779.6" y1="98.5" x2="779.6" y2="483.5" stroke="#dedede" stroke-opacity="0.85" stroke-width="1"/>
<path d="M8.50 306.37 L10.50 307.86 L12.50 309.34 L14.50 310.83 L16.50 312.31 L18.50 313.80 L20.50 315.29 L22.50 316.77 L24.50 318.26 L26.50 319.74 L28.50 321.19 L30.50 322.57 L32.50 323.81 L34.50 324.86 L36.50 325.76 L38.50 326.59 L40.50 327.40 L42.50 328.20 L44.50 329.00 L46.50 329.80 L48.50 330.60 L50.50 331.40 L52.50 332.20 L54.50 333.00 L56.50 333.80 L58.50 334.59 L60.50 335.36 L62.50 336.05 L64.50 336.57 L66.50 336.86 L68.50 336.94 L70.50 336.90 L72.50 336.82 L74.50 336.72 L76.50 336.61 L78.50 336.50 L80.50 336.37 L82.50 336.13 L84.50 335.71 L86.50 335.05 L88.50 334.20 L90.50 333.24 L92.50 332.27 L94.50 331.32 L96.50 330.46 L98.50 329.75 L100.50 329.17 L102.50 328.69 L104.50 328.25 L106.50 327.82 L108.50 327.40 L110.50 326.98 L112.50 326.56 L114.50 326.14 L116.50 325.72 L118.50 325.32 L120.50 324.99 L122.50 324.80 L124.50 324.85 L126.50 325.14 L128.50 325.61 L130.50 326.15 L132.50 326.72 L134.50 327.29 L136.50 327.87 L138.50 328.44 L140.50 329.02 L142.50 329.62 L144.50 330.31 L146.50 331.15 L148.50 332.16 L150.50 333.33 L152.50 334.56 L154.50 335.83 L156.50 337.13 L158.50 338.51 L160.50 340.01 L162.50 341.64 L164.50 343.37 L166.50 345.15 L168.50 346.92 L170.50 348.63 L172.50 350.20 L174.50 351.59 L176.50 352.82 L178.50 353.95 L180.50 355.02 L182.50 356.05 L184.50 356.97 L186.50 357.73 L188.50 358.30 L190.50 358.73 L192.50 359.09 L194.50 359.41 L196.50 359.65 L198.50 359.75 L200.50 359.65 L202.50 359.38 L204.50 359.00 L206.50 358.58 L208.50 358.12 L210.50 357.60 L212.50 356.98 L214.50 356.26 L216.50 355.46 L218.50 354.62 L220.50 353.77 L222.50 352.91 L224.50 352.02 L226.50 351.08 L228.50 350.06 L230.50 348.98 L232.50 347.86 L234.50 346.72 L236.50 345.58 L238.50 344.46 L240.50 343.38 L242.50 342.42 L244.50 341.68 L246.50 341.16 L248.50 340.83 L250.50 340.59 L252.50 340.40 L254.50 340.22 L256.50 340.04 L258.50 339.87 L260.50 339.70 L262.50 339.53 L264.50 339.36 L266.50 339.20 L268.50 339.07 L270.50 339.02 L272.50 339.05 L274.50 339.16 L276.50 339.33 L278.50 339.51 L280.50 339.70 L282.50 339.89 L284.50 340.08 L286.50 340.28 L288.50 340.50 L290.50 340.75 L292.50 341.04 L294.50 341.36 L296.50 341.68 L298.50 341.99 L300.50 342.19 L302.50 342.03 L304.50 341.12 L306.50 339.21 L308.50 336.39 L310.50 332.98 L312.50 329.25 L314.50 325.35 L316.50 321.50 L318.50 318.11 L320.50 315.48 L322.50 313.59 L324.50 312.15 L326.50 310.91 L328.50 309.79 L330.50 308.82 L332.50 308.09 L334.50 307.59 L336.50 307.25 L338.50 306.99 L340.50 306.74 L342.50 306.51 L344.50 306.27 L346.50 306.03 L348.50 305.79 L350.50 305.54 L352.50 305.29 L354.50 305.03 L356.50 304.76 L358.50 304.49 L360.50 304.22 L362.50 303.95 L364.50 303.68 L366.50 303.41 L368.50 303.14 L370.50 302.87 L372.50 302.57 L374.50 302.21 L376.50 301.69 L378.50 300.99 L380.50 300.15 L382.50 299.32 L384.50 298.63 L386.50 298.13 L388.50 297.78 L390.50 297.50 L392.50 297.25 L394.50 297.00 L396.50 296.76 L398.50 296.53 L400.50 296.31 L402.50 296.13 L404.50 295.97 L406.50 295.82 L408.50 295.68 L410.50 295.55 L412.50 295.43 L414.50 295.35 L416.50 295.37 L418.50 295.51 L420.50 295.76 L422.50 296.08 L424.50 296.44 L426.50 296.85 L428.50 297.38 L430.50 298.08 L432.50 298.95 L434.50 299.87 L436.50 300.65 L438.50 301.18 L440.50 301.53 L442.50 301.93 L444.50 302.59 L446.50 303.56 L448.50 304.66 L450.50 305.62 L452.50 306.33 L454.50 306.81 L456.50 307.15 L458.50 307.39 L460.50 307.50 L462.50 307.48 L464.50 307.36 L466.50 307.20 L468.50 307.02 L470.50 306.83 L472.50 306.65 L474.50 306.47 L476.50 306.28 L478.50 306.10 L480.50 305.94 L482.50 305.84 L484.50 305.86 L486.50 306.04 L488.50 306.34 L490.50 306.69 L492.50 307.02 L494.50 307.33 L496.50 307.62 L498.50 307.91 L500.50 308.19 L502.50 308.48 L504.50 308.76 L506.50 309.05 L508.50 309.33 L510.50 309.61 L512.50 309.86 L514.50 310.05 L516.50 310.13 L518.50 310.09 L520.50 309.97 L522.50 309.80 L524.50 309.62 L526.50 309.43 L528.50 309.25 L530.50 309.06 L532.50 308.88 L534.50 308.69 L536.50 308.51 L538.50 308.32 L540.50 308.14 L542.50 307.95 L544.50 307.76 L546.50 307.52 L548.50 307.20 L550.50 306.76 L552.50 306.18 L554.50 305.51 L556.50 304.73 L558.50 303.72 L560.50 302.30 L562.50 300.27 L564.50 297.63 L566.50 294.47 L568.50 290.97 L570.50 287.42 L572.50 284.26 L574.50 281.71 L576.50 279.65 L578.50 277.83 L580.50 276.10 L582.50 274.43 L584.50 272.81 L586.50 271.23 L588.50 269.68 L590.50 268.13 L592.50 266.54 L594.50 264.85 L596.50 263.04 L598.50 261.13 L600.50 259.15 L602.50 257.16 L604.50 255.20 L606.50 253.30 L608.50 251.48 L610.50 249.71 L612.50 247.96 L614.50 246.21 L616.50 244.42 L618.50 242.57 L620.50 240.66 L622.50 238.69 L624.50 236.73 L626.50 234.84 L628.50 233.14 L630.50 231.72 L632.50 230.59 L634.50 229.66 L636.50 228.83 L638.50 228.03 L640.50 227.27 L642.50 226.55 L644.50 225.86 L646.50 225.18 L648.50 224.49 L650.50 223.77 L652.50 222.99 L654.50 222.14 L656.50 221.26 L658.50 220.36 L660.50 219.49 L662.50 218.68 L664.50 217.95 L666.50 217.29 L668.50 216.67 L670.50 216.07 L672.50 215.46 L674.50 214.83 L676.50 214.17 L678.50 213.48 L680.50 212.79 L682.50 212.09 L684.50 211.41 L686.50 210.77 L688.50 210.17 L690.50 209.61 L692.50 209.05 L694.50 208.45 L696.50 207.73 L698.50 206.79 L700.50 205.61 L702.50 204.27 L704.50 202.86 L706.50 201.51 L708.50 200.33 L710.50 199.45 L712.50 198.93 L714.50 198.75 L716.50 198.82 L718.50 199.03 L720.50 199.27 L722.50 199.49 L724.50 199.68 L726.50 199.85 L728.50 200.02 L730.50 200.14 L732.50 200.16 L734.50 200.02 L736.50 199.70 L738.50 199.24 L740.50 198.72 L742.50 198.18 L744.50 197.63 L746.50 197.07 L748.50 196.50 L750.50 195.92 L752.50 195.32 L754.50 194.71 L756.50 194.10 L758.50 193.51 L760.50 192.97 L762.50 192.56 L764.50 192.40 L766.50 192.49 L768.50 192.77 L770.50 193.15 L772.50 193.55 L774.50 193.93 L776.50 194.23 L778.50 194.40 L780.50 194.44 L782.50 194.34 L784.50 194.12 L786.50 193.71 L788.50 193.08 L790.50 192.28 L792.50 191.50 L794.50 190.91 L796.50 190.60 L798.50 190.42 L800.50 190.12 L802.50 189.54 L804.50 188.73 L806.50 187.79 L808.50 186.77 L810.50 185.64 L812.50 184.30 L814.50 182.67 L816.50 180.78 L818.50 178.74 L820.50 176.64 L822.50 174.58 L824.50 172.61 L826.50 170.80 L828.50 169.21 L830.50 167.84 L832.50 166.69 L834.50 165.76 L836.50 164.97 L838.50 164.25 L840.50 163.56 L842.50 162.88 L844.50 162.22 L846.50 161.58 L848.50 160.96 L850.50 160.36 L852.50 159.81 L854.50 159.35 L856.50 159.11 L858.50 159.13 L860.50 159.35 L862.50 159.58 L864.50 159.65 L866.50 159.44 L868.50 158.97 L870.50 158.35 L872.50 157.66 L874.50 156.89 L876.50 156.01 L878.50 154.93 L880.50 153.57 L882.50 151.83 L884.50 149.71 L886.50 147.38 L888.50 145.09 L890.50 143.08 L892.50 141.43 L894.50 140.04 L896.50 138.78 L898.50 137.56" fill="none" stroke="#93acdd" stroke-width="1.1"/>
<path d="M8.50 396.05 L10.50 395.06 L12.50 394.07 L14.50 393.08 L16.50 392.09 L18.50 391.10 L20.50 390.11 L22.50 389.12 L24.50 388.14 L26.50 387.19 L28.50 386.34 L30.50 385.63 L32.50 385.08 L34.50 384.66 L36.50 384.30 L38.50 383.95 L40.50 383.62 L42.50 383.28 L44.50 382.94 L46.50 382.61 L48.50 382.30 L50.50 382.03 L52.50 381.79 L54.50 381.58 L56.50 381.39 L58.50 381.20 L60.50 381.01 L62.50 380.83 L64.50 380.69 L66.50 380.64 L68.50 380.74 L70.50 381.01 L72.50 381.40 L74.50 381.86 L76.50 382.40 L78.50 383.11 L80.50 384.15 L82.50 385.65 L84.50 387.56 L86.50 389.71 L88.50 391.93 L90.50 394.13 L92.50 396.28 L94.50 398.40 L96.50 400.51 L98.50 402.65 L100.50 404.87 L102.50 407.21 L104.50 409.65 L106.50 412.19 L108.50 414.81 L110.50 417.49 L112.50 420.22 L114.50 422.97 L116.50 425.76 L118.50 428.57 L120.50 431.37 L122.50 434.06 L124.50 436.52 L126.50 438.64 L128.50 440.38 L130.50 441.77 L132.50 442.87 L134.50 443.73 L136.50 444.39 L138.50 444.88 L140.50 445.21 L142.50 445.45 L144.50 445.62 L146.50 445.68 L148.50 445.61 L150.50 445.36 L152.50 444.93 L154.50 444.37 L156.50 443.74 L158.50 443.07 L160.50 442.40 L162.50 441.73 L164.50 441.06 L166.50 440.40 L168.50 439.77 L170.50 439.18 L172.50 438.65 L174.50 438.17 L176.50 437.72 L178.50 437.31 L180.50 436.95 L182.50 436.64 L184.50 436.35 L186.50 436.07 L188.50 435.80 L190.50 435.53 L192.50 435.25 L194.50 434.98 L196.50 434.70 L198.50 434.43 L200.50 434.16 L202.50 433.88 L204.50 433.61 L206.50 433.34 L208.50 433.06 L210.50 432.79 L212.50 432.54 L214.50 432.31 L216.50 432.12 L218.50 431.95 L220.50 431.80 L222.50 431.66 L224.50 431.52 L226.50 431.38 L228.50 431.24 L230.50 431.09 L232.50 430.91 L234.50 430.62 L236.50 430.06 L238.50 429.11 L240.50 427.76 L242.50 426.13 L244.50 424.37 L246.50 422.58 L248.50 420.79 L250.50 419.01 L252.50 417.30 L254.50 415.66 L256.50 414.13 L258.50 412.65 L260.50 411.21 L262.50 409.78 L264.50 408.35 L266.50 406.92 L268.50 405.49 L270.50 404.06 L272.50 402.64 L274.50 401.23 L276.50 399.87 L278.50 398.54 L280.50 397.25 L282.50 395.99 L284.50 394.72 L286.50 393.47 L288.50 392.23 L290.50 391.03 L292.50 389.90 L294.50 388.84 L296.50 387.84 L298.50 386.90 L300.50 386.08 L302.50 385.56 L304.50 385.51 L306.50 386.01 L308.50 386.94 L310.50 388.19 L312.50 389.80 L314.50 391.89 L316.50 394.34 L318.50 396.77 L320.50 398.72 L322.50 400.04 L324.50 400.78 L326.50 401.03 L328.50 400.91 L330.50 400.55 L332.50 400.07 L334.50 399.57 L336.50 399.05 L338.50 398.54 L340.50 398.02 L342.50 397.51 L344.50 397.00 L346.50 396.48 L348.50 395.97 L350.50 395.46 L352.50 394.95 L354.50 394.45 L356.50 393.97 L358.50 393.50 L360.50 393.04 L362.50 392.57 L364.50 392.11 L366.50 391.65 L368.50 391.19 L370.50 390.73 L372.50 390.27 L374.50 389.81 L376.50 389.35 L378.50 388.89 L380.50 388.43 L382.50 387.97 L384.50 387.50 L386.50 387.02 L388.50 386.52 L390.50 386.00 L392.50 385.46 L394.50 384.92 L396.50 384.38 L398.50 383.83 L400.50 383.29 L402.50 382.75 L404.50 382.20 L406.50 381.65 L408.50 381.05 L410.50 380.30 L412.50 379.17 L414.50 377.47 L416.50 375.17 L418.50 372.50 L420.50 369.76 L422.50 367.21 L424.50 364.99 L426.50 363.00 L428.50 361.00 L430.50 358.78 L432.50 356.30 L434.50 353.83 L436.50 351.80 L438.50 350.48 L440.50 349.78 L442.50 349.37 L444.50 348.91 L446.50 348.28 L448.50 347.54 L450.50 346.83 L452.50 346.23 L454.50 345.71 L456.50 345.25 L458.50 344.84 L460.50 344.53 L462.50 344.40 L464.50 344.48 L466.50 344.66 L468.50 344.73 L470.50 344.47 L472.50 343.83 L474.50 342.90 L476.50 341.84 L478.50 340.77 L480.50 339.76 L482.50 338.93 L484.50 338.35 L486.50 338.00 L488.50 337.82 L490.50 337.71 L492.50 337.62 L494.50 337.51 L496.50 337.35 L498.50 337.10 L500.50 336.75 L502.50 336.33 L504.50 335.87 L506.50 335.40 L508.50 334.94 L510.50 334.50 L512.50 334.17 L514.50 334.03 L516.50 334.17 L518.50 334.55 L520.50 335.07 L522.50 335.65 L524.50 336.25 L526.50 336.85 L528.50 337.45 L530.50 338.05 L532.50 338.64 L534.50 339.21 L536.50 339.70 L538.50 340.09 L540.50 340.35 L542.50 340.51 L544.50 340.64 L546.50 340.74 L548.50 340.85 L550.50 340.95 L552.50 341.06 L554.50 341.17 L556.50 341.36 L558.50 341.78 L560.50 342.65 L562.50 344.14 L564.50 346.17 L566.50 348.45 L568.50 350.69 L570.50 352.67 L572.50 354.34 L574.50 355.81 L576.50 357.21 L578.50 358.54 L580.50 359.65 L582.50 360.42 L584.50 360.93 L586.50 361.35 L588.50 361.86 L590.50 362.58 L592.50 363.52 L594.50 364.59 L596.50 365.62 L598.50 366.50 L600.50 367.19 L602.50 367.74 L604.50 368.24 L606.50 368.72 L608.50 369.20 L610.50 369.64 L612.50 369.99 L614.50 370.16 L616.50 370.06 L618.50 369.72 L620.50 369.22 L622.50 368.65 L624.50 368.07 L626.50 367.47 L628.50 366.84 L630.50 366.09 L632.50 365.11 L634.50 363.82 L636.50 362.25 L638.50 360.52 L640.50 358.73 L642.50 356.93 L644.50 355.12 L646.50 353.29 L648.50 351.43 L650.50 349.47 L652.50 347.41 L654.50 345.24 L656.50 342.96 L658.50 340.51 L660.50 337.85 L662.50 334.98 L664.50 331.98 L666.50 328.93 L668.50 325.86 L670.50 322.81 L672.50 319.82 L674.50 316.92 L676.50 314.10 L678.50 311.35 L680.50 308.63 L682.50 305.92 L684.50 303.22 L686.50 300.52 L688.50 297.86 L690.50 295.35 L692.50 293.17 L694.50 291.49 L696.50 290.32 L698.50 289.51 L700.50 288.85 L702.50 288.22 L704.50 287.51 L706.50 286.62 L708.50 285.44 L710.50 283.95 L712.50 282.26 L714.50 280.46 L716.50 278.63 L718.50 276.80 L720.50 275.00 L722.50 273.29 L724.50 271.75 L726.50 270.43 L728.50 269.29 L730.50 268.24 L732.50 267.23 L734.50 266.22 L736.50 265.21 L738.50 264.21 L740.50 263.21 L742.50 262.20 L744.50 261.20 L746.50 260.20 L748.50 259.20 L750.50 258.20 L752.50 257.20 L754.50 256.20 L756.50 255.20 L758.50 254.20 L760.50 253.20 L762.50 252.18 L764.50 251.11 L766.50 249.95 L768.50 248.66 L770.50 247.26 L772.50 245.80 L774.50 244.31 L776.50 242.81 L778.50 241.33 L780.50 239.88 L782.50 238.55 L784.50 237.43 L786.50 236.58 L788.50 235.93 L790.50 235.39 L792.50 234.89 L794.50 234.41 L796.50 233.97 L798.50 233.60 L800.50 233.33 L802.50 233.14 L804.50 232.99 L806.50 232.88 L808.50 232.84 L810.50 232.89 L812.50 233.06 L814.50 233.33 L816.50 233.66 L818.50 234.08 L820.50 234.62 L822.50 235.28 L824.50 236.02 L826.50 236.80 L828.50 237.57 L830.50 238.27 L832.50 238.82 L834.50 239.11 L836.50 239.13 L838.50 238.96 L840.50 238.69 L842.50 238.37 L844.50 237.96 L846.50 237.35 L848.50 236.40 L850.50 235.08 L852.50 233.49 L854.50 231.78 L856.50 230.03 L858.50 228.27 L860.50 226.54 L862.50 224.90 L864.50 223.45 L866.50 222.30 L868.50 221.42 L870.50 220.71 L872.50 220.06 L874.50 219.49 L876.50 219.09 L878.50 219.03 L880.50 219.40 L882.50 220.10 L884.50 220.96 L886.50 221.83 L888.50 222.53 L890.50 222.89 L892.50 222.75 L894.50 222.15 L896.50 221.26 L898.50 220.25" fill="none" stroke="#93acdd" stroke-width="1.1"/>
<path d="M8.50 346.88 L10.50 347.21 L12.50 347.54 L14.50 347.87 L16.50 348.20 L18.50 348.52 L20.50 348.85 L22.50 349.18 L24.50 349.51 L26.50 349.84 L28.50 350.17 L30.50 350.49 L32.50 350.82 L34.50 351.15 L36.50 351.48 L38.50 351.81 L40.50 352.14 L42.50 352.49 L44.50 352.84 L46.50 353.21 L48.50 353.61 L50.50 354.03 L52.50 354.48 L54.50 354.95 L56.50 355.44 L58.50 355.93 L60.50 356.43 L62.50 356.93 L64.50 357.43 L66.50 357.92 L68.50 358.42 L70.50 358.92 L72.50 359.40 L74.50 359.86 L76.50 360.29 L78.50 360.67 L80.50 360.99 L82.50 361.25 L84.50 361.46 L86.50 361.64 L88.50 361.80 L90.50 361.98 L92.50 362.21 L94.50 362.55 L96.50 363.01 L98.50 363.63 L100.50 364.39 L102.50 365.26 L104.50 366.20 L106.50 367.13 L108.50 368.02 L110.50 368.85 L112.50 369.62 L114.50 370.33 L116.50 371.01 L118.50 371.66 L120.50 372.31 L122.50 372.95 L124.50 373.59 L126.50 374.23 L128.50 374.86 L130.50 375.47 L132.50 376.05 L134.50 376.58 L136.50 377.06 L138.50 377.49 L140.50 377.89 L142.50 378.30 L144.50 378.78 L146.50 379.35 L148.50 380.05 L150.50 380.87 L152.50 381.78 L154.50 382.76 L156.50 383.75 L158.50 384.74 L160.50 385.68 L162.50 386.55 L164.50 387.33 L166.50 387.99 L168.50 388.55 L170.50 389.02 L172.50 389.43 L174.50 389.79 L176.50 390.13 L178.50 390.44 L180.50 390.74 L182.50 391.03 L184.50 391.30 L186.50 391.57 L188.50 391.82 L190.50 392.07 L192.50 392.28 L194.50 392.45 L196.50 392.55 L198.50 392.55 L200.50 392.44 L202.50 392.24 L204.50 391.97 L206.50 391.65 L208.50 391.32 L210.50 391.00 L212.50 390.71 L214.50 390.45 L216.50 390.20 L218.50 389.93 L220.50 389.61 L222.50 389.20 L224.50 388.67 L226.50 388.03 L228.50 387.27 L230.50 386.42 L232.50 385.50 L234.50 384.52 L236.50 383.49 L238.50 382.39 L240.50 381.23 L242.50 380.01 L244.50 378.75 L246.50 377.50 L248.50 376.31 L250.50 375.19 L252.50 374.17 L254.50 373.24 L256.50 372.38 L258.50 371.58 L260.50 370.81 L262.50 370.07 L264.50 369.37 L266.50 368.72 L268.50 368.13 L270.50 367.59 L272.50 367.11 L274.50 366.66 L276.50 366.24 L278.50 365.84 L280.50 365.44 L282.50 365.05 L284.50 364.66 L286.50 364.26 L288.50 363.86 L290.50 363.46 L292.50 363.04 L294.50 362.59 L296.50 362.13 L298.50 361.63 L300.50 361.10 L302.50 360.54 L304.50 359.97 L306.50 359.39 L308.50 358.80 L310.50 358.21 L312.50 357.61 L314.50 357.01 L316.50 356.40 L318.50 355.77 L320.50 355.13 L322.50 354.46 L324.50 353.79 L326.50 353.10 L328.50 352.40 L330.50 351.70 L332.50 351.00 L334.50 350.31 L336.50 349.62 L338.50 348.96 L340.50 348.32 L342.50 347.73 L344.50 347.19 L346.50 346.69 L348.50 346.23 L350.50 345.79 L352.50 345.37 L354.50 344.95 L356.50 344.54 L358.50 344.13 L360.50 343.73 L362.50 343.32 L364.50 342.91 L366.50 342.51 L368.50 342.10 L370.50 341.70 L372.50 341.30 L374.50 340.90 L376.50 340.50 L378.50 340.10 L380.50 339.70 L382.50 339.30 L384.50 338.91 L386.50 338.52 L388.50 338.15 L390.50 337.78 L392.50 337.42 L394.50 337.07 L396.50 336.73 L398.50 336.40 L400.50 336.06 L402.50 335.71 L404.50 335.33 L406.50 334.92 L408.50 334.46 L410.50 333.92 L412.50 333.32 L414.50 332.66 L416.50 331.95 L418.50 331.21 L420.50 330.45 L422.50 329.68 L424.50 328.92 L426.50 328.16 L428.50 327.41 L430.50 326.70 L432.50 326.06 L434.50 325.51 L436.50 325.09 L438.50 324.82 L440.50 324.68 L442.50 324.65 L444.50 324.71 L446.50 324.81 L448.50 324.93 L450.50 325.05 L452.50 325.17 L454.50 325.28 L456.50 325.37 L458.50 325.44 L460.50 325.47 L462.50 325.44 L464.50 325.34 L466.50 325.16 L468.50 324.90 L470.50 324.59 L472.50 324.23 L474.50 323.85 L476.50 323.48 L478.50 323.14 L480.50 322.85 L482.50 322.63 L484.50 322.49 L486.50 322.44 L488.50 322.46 L490.50 322.54 L492.50 322.65 L494.50 322.77 L496.50 322.91 L498.50 323.05 L500.50 323.19 L502.50 323.33 L504.50 323.47 L506.50 323.61 L508.50 323.74 L510.50 323.86 L512.50 323.95 L514.50 324.00 L516.50 324.00 L518.50 323.93 L520.50 323.79 L522.50 323.59 L524.50 323.35 L526.50 323.07 L528.50 322.78 L530.50 322.48 L532.50 322.18 L534.50 321.88 L536.50 321.58 L538.50 321.28 L540.50 320.98 L542.50 320.68 L544.50 320.40 L546.50 320.12 L548.50 319.86 L550.50 319.62 L552.50 319.41 L554.50 319.22 L556.50 319.05 L558.50 318.88 L560.50 318.71 L562.50 318.54 L564.50 318.33 L566.50 318.08 L568.50 317.77 L570.50 317.38 L572.50 316.91 L574.50 316.37 L576.50 315.77 L578.50 315.13 L580.50 314.46 L582.50 313.77 L584.50 313.04 L586.50 312.25 L588.50 311.38 L590.50 310.42 L592.50 309.36 L594.50 308.21 L596.50 307.00 L598.50 305.74 L600.50 304.46 L602.50 303.18 L604.50 301.92 L606.50 300.68 L608.50 299.48 L610.50 298.33 L612.50 297.22 L614.50 296.15 L616.50 295.11 L618.50 294.09 L620.50 293.07 L622.50 292.06 L624.50 291.04 L626.50 290.01 L628.50 288.98 L630.50 287.92 L632.50 286.86 L634.50 285.78 L636.50 284.70 L638.50 283.60 L640.50 282.50 L642.50 281.37 L644.50 280.20 L646.50 278.97 L648.50 277.66 L650.50 276.27 L652.50 274.81 L654.50 273.29 L656.50 271.72 L658.50 270.14 L660.50 268.54 L662.50 266.96 L664.50 265.39 L666.50 263.85 L668.50 262.33 L670.50 260.86 L672.50 259.41 L674.50 257.98 L676.50 256.57 L678.50 255.18 L680.50 253.80 L682.50 252.44 L684.50 251.12 L686.50 249.86 L688.50 248.65 L690.50 247.50 L692.50 246.41 L694.50 245.35 L696.50 244.32 L698.50 243.31 L700.50 242.32 L702.50 241.35 L704.50 240.42 L706.50 239.53 L708.50 238.69 L710.50 237.90 L712.50 237.15 L714.50 236.43 L716.50 235.73 L718.50 235.04 L720.50 234.35 L722.50 233.68 L724.50 233.01 L726.50 232.36 L728.50 231.72 L730.50 231.10 L732.50 230.49 L734.50 229.89 L736.50 229.29 L738.50 228.69 L740.50 228.09 L742.50 227.48 L744.50 226.86 L746.50 226.24 L748.50 225.60 L750.50 224.95 L752.50 224.30 L754.50 223.64 L756.50 222.98 L758.50 222.32 L760.50 221.66 L762.50 221.00 L764.50 220.35 L766.50 219.70 L768.50 219.08 L770.50 218.47 L772.50 217.87 L774.50 217.30 L776.50 216.74 L778.50 216.18 L780.50 215.63 L782.50 215.08 L784.50 214.54 L786.50 213.99 L788.50 213.44 L790.50 212.90 L792.50 212.35 L794.50 211.79 L796.50 211.24 L798.50 210.68 L800.50 210.11 L802.50 209.53 L804.50 208.94 L806.50 208.35 L808.50 207.76 L810.50 207.17 L812.50 206.57 L814.50 205.97 L816.50 205.38 L818.50 204.79 L820.50 204.21 L822.50 203.63 L824.50 203.08 L826.50 202.54 L828.50 202.03 L830.50 201.53 L832.50 201.04 L834.50 200.56 L836.50 200.08 L838.50 199.58 L840.50 199.06 L842.50 198.49 L844.50 197.87 L846.50 197.19 L848.50 196.44 L850.50 195.65 L852.50 194.83 L854.50 193.98 L856.50 193.12 L858.50 192.26 L860.50 191.41 L862.50 190.56 L864.50 189.73 L866.50 188.90 L868.50 188.08 L870.50 187.27 L872.50 186.47 L874.50 185.67 L876.50 184.86 L878.50 184.06 L880.50 183.24 L882.50 182.41 L884.50 181.56 L886.50 180.70 L888.50 179.82 L890.50 178.93 L892.50 178.04 L894.50 177.14 L896.50 176.24 L898.50 175.34" fill="none" stroke="#bcd0f6" stroke-width="1"/>
<path d="M8.50 275.46 L10.50 275.70 L12.50 275.94 L14.50 276.18 L16.50 276.42 L18.50 276.67 L20.50 276.91 L22.50 277.15 L24.50 277.39 L26.50 277.63 L28.50 277.87 L30.50 278.11 L32.50 278.35 L34.50 278.59 L36.50 278.84 L38.50 279.08 L40.50 279.32 L42.50 279.56 L44.50 279.80 L46.50 280.04 L48.50 280.28 L50.50 280.52 L52.50 280.77 L54.50 281.01 L56.50 281.25 L58.50 281.50 L60.50 281.75 L62.50 282.00 L64.50 282.26 L66.50 282.52 L68.50 282.79 L70.50 283.07 L72.50 283.36 L74.50 283.66 L76.50 283.97 L78.50 284.30 L80.50 284.64 L82.50 285.00 L84.50 285.37 L86.50 285.75 L88.50 286.15 L90.50 286.57 L92.50 286.99 L94.50 287.42 L96.50 287.86 L98.50 288.31 L100.50 288.76 L102.50 289.22 L104.50 289.67 L106.50 290.13 L108.50 290.60 L110.50 291.06 L112.50 291.52 L114.50 291.98 L116.50 292.43 L118.50 292.89 L120.50 293.34 L122.50 293.79 L124.50 294.24 L126.50 294.68 L128.50 295.11 L130.50 295.54 L132.50 295.97 L134.50 296.39 L136.50 296.81 L138.50 297.23 L140.50 297.64 L142.50 298.04 L144.50 298.45 L146.50 298.85 L148.50 299.25 L150.50 299.65 L152.50 300.05 L154.50 300.45 L156.50 300.84 L158.50 301.24 L160.50 301.63 L162.50 302.02 L164.50 302.41 L166.50 302.80 L168.50 303.18 L170.50 303.56 L172.50 303.94 L174.50 304.31 L176.50 304.68 L178.50 305.05 L180.50 305.41 L182.50 305.77 L184.50 306.12 L186.50 306.47 L188.50 306.81 L190.50 307.15 L192.50 307.49 L194.50 307.83 L196.50 308.17 L198.50 308.50 L200.50 308.84 L202.50 309.18 L204.50 309.52 L206.50 309.86 L208.50 310.20 L210.50 310.55 L212.50 310.90 L214.50 311.26 L216.50 311.62 L218.50 311.99 L220.50 312.35 L222.50 312.72 L224.50 313.10 L226.50 313.47 L228.50 313.85 L230.50 314.23 L232.50 314.61 L234.50 314.99 L236.50 315.36 L238.50 315.74 L240.50 316.11 L242.50 316.48 L244.50 316.85 L246.50 317.22 L248.50 317.58 L250.50 317.94 L252.50 318.30 L254.50 318.66 L256.50 319.01 L258.50 319.36 L260.50 319.70 L262.50 320.04 L264.50 320.38 L266.50 320.71 L268.50 321.04 L270.50 321.36 L272.50 321.68 L274.50 322.00 L276.50 322.31 L278.50 322.62 L280.50 322.92 L282.50 323.22 L284.50 323.52 L286.50 323.82 L288.50 324.11 L290.50 324.40 L292.50 324.69 L294.50 324.98 L296.50 325.26 L298.50 325.54 L300.50 325.82 L302.50 326.10 L304.50 326.37 L306.50 326.64 L308.50 326.90 L310.50 327.16 L312.50 327.41 L314.50 327.66 L316.50 327.91 L318.50 328.15 L320.50 328.38 L322.50 328.61 L324.50 328.84 L326.50 329.06 L328.50 329.27 L330.50 329.48 L332.50 329.69 L334.50 329.90 L336.50 330.10 L338.50 330.30 L340.50 330.50 L342.50 330.70 L344.50 330.90 L346.50 331.09 L348.50 331.29 L350.50 331.49 L352.50 331.69 L354.50 331.88 L356.50 332.08 L358.50 332.28 L360.50 332.48 L362.50 332.68 L364.50 332.89 L366.50 333.09 L368.50 333.29 L370.50 333.50 L372.50 333.71 L374.50 333.91 L376.50 334.12 L378.50 334.33 L380.50 334.54 L382.50 334.76 L384.50 334.97 L386.50 335.18 L388.50 335.40 L390.50 335.62 L392.50 335.84 L394.50 336.06 L396.50 336.28 L398.50 336.51 L400.50 336.74 L402.50 336.97 L404.50 337.20 L406.50 337.43 L408.50 337.67 L410.50 337.91 L412.50 338.15 L414.50 338.39 L416.50 338.63 L418.50 338.87 L420.50 339.10 L422.50 339.34 L424.50 339.58 L426.50 339.81 L428.50 340.04 L430.50 340.26 L432.50 340.49 L434.50 340.71 L436.50 340.92 L438.50 341.13 L440.50 341.34 L442.50 341.54 L444.50 341.74 L446.50 341.94 L448.50 342.13 L450.50 342.32 L452.50 342.51 L454.50 342.70 L456.50 342.89 L458.50 343.07 L460.50 343.26 L462.50 343.44 L464.50 343.62 L466.50 343.80 L468.50 343.98 L470.50 344.16 L472.50 344.34 L474.50 344.52 L476.50 344.69 L478.50 344.86 L480.50 345.04 L482.50 345.21 L484.50 345.37 L486.50 345.54 L488.50 345.70 L490.50 345.87 L492.50 346.03 L494.50 346.18 L496.50 346.34 L498.50 346.49 L500.50 346.65 L502.50 346.80 L504.50 346.95 L506.50 347.10 L508.50 347.24 L510.50 347.39 L512.50 347.54 L514.50 347.68 L516.50 347.83 L518.50 347.97 L520.50 348.11 L522.50 348.25 L524.50 348.39 L526.50 348.53 L528.50 348.66 L530.50 348.79 L532.50 348.92 L534.50 349.04 L536.50 349.15 L538.50 349.26 L540.50 349.35 L542.50 349.44 L544.50 349.51 L546.50 349.57 L548.50 349.62 L550.50 349.64 L552.50 349.65 L554.50 349.64 L556.50 349.60 L558.50 349.55 L560.50 349.46 L562.50 349.36 L564.50 349.23 L566.50 349.08 L568.50 348.91 L570.50 348.72 L572.50 348.51 L574.50 348.29 L576.50 348.06 L578.50 347.81 L580.50 347.56 L582.50 347.30 L584.50 347.03 L586.50 346.75 L588.50 346.46 L590.50 346.16 L592.50 345.86 L594.50 345.55 L596.50 345.22 L598.50 344.89 L600.50 344.55 L602.50 344.20 L604.50 343.85 L606.50 343.48 L608.50 343.11 L610.50 342.73 L612.50 342.35 L614.50 341.96 L616.50 341.57 L618.50 341.18 L620.50 340.78 L622.50 340.38 L624.50 339.98 L626.50 339.57 L628.50 339.16 L630.50 338.75 L632.50 338.34 L634.50 337.92 L636.50 337.50 L638.50 337.08 L640.50 336.65 L642.50 336.21 L644.50 335.78 L646.50 335.34 L648.50 334.89 L650.50 334.44 L652.50 333.99 L654.50 333.54 L656.50 333.08 L658.50 332.63 L660.50 332.17 L662.50 331.71 L664.50 331.25 L666.50 330.79 L668.50 330.33 L670.50 329.87 L672.50 329.41 L674.50 328.95 L676.50 328.49 L678.50 328.03 L680.50 327.56 L682.50 327.10 L684.50 326.64 L686.50 326.18 L688.50 325.72 L690.50 325.26 L692.50 324.79 L694.50 324.33 L696.50 323.87 L698.50 323.41 L700.50 322.94 L702.50 322.48 L704.50 322.01 L706.50 321.55 L708.50 321.08 L710.50 320.61 L712.50 320.14 L714.50 319.66 L716.50 319.18 L718.50 318.70 L720.50 318.20 L722.50 317.70 L724.50 317.19 L726.50 316.66 L728.50 316.12 L730.50 315.57 L732.50 315.00 L734.50 314.41 L736.50 313.82 L738.50 313.20 L740.50 312.57 L742.50 311.93 L744.50 311.28 L746.50 310.62 L748.50 309.95 L750.50 309.27 L752.50 308.59 L754.50 307.90 L756.50 307.21 L758.50 306.51 L760.50 305.82 L762.50 305.12 L764.50 304.42 L766.50 303.73 L768.50 303.03 L770.50 302.33 L772.50 301.63 L774.50 300.93 L776.50 300.23 L778.50 299.53 L780.50 298.83 L782.50 298.14 L784.50 297.44 L786.50 296.75 L788.50 296.05 L790.50 295.36 L792.50 294.68 L794.50 293.99 L796.50 293.30 L798.50 292.62 L800.50 291.94 L802.50 291.27 L804.50 290.59 L806.50 289.92 L808.50 289.25 L810.50 288.58 L812.50 287.91 L814.50 287.24 L816.50 286.57 L818.50 285.91 L820.50 285.25 L822.50 284.59 L824.50 283.93 L826.50 283.27 L828.50 282.62 L830.50 281.97 L832.50 281.32 L834.50 280.68 L836.50 280.04 L838.50 279.41 L840.50 278.78 L842.50 278.15 L844.50 277.53 L846.50 276.92 L848.50 276.30 L850.50 275.69 L852.50 275.08 L854.50 274.48 L856.50 273.88 L858.50 273.27 L860.50 272.67 L862.50 272.07 L864.50 271.48 L866.50 270.88 L868.50 270.29 L870.50 269.70 L872.50 269.11 L874.50 268.52 L876.50 267.94 L878.50 267.36 L880.50 266.78 L882.50 266.21 L884.50 265.64 L886.50 265.07 L888.50 264.51 L890.50 263.95 L892.50 263.39 L894.50 262.83 L896.50 262.27 L898.50 261.72" fill="none" stroke="#f02828" stroke-width="1.3"/>
<path d="M28.60 304.70 L30.60 304.78 L32.60 304.85 L34.60 304.93 L36.60 305.01 L38.60 305.08 L40.60 305.16 L42.60 305.24 L44.60 305.32 L46.60 305.39 L48.60 305.47 L50.60 305.55 L52.60 305.62 L54.60 305.70 L56.60 305.78 L58.60 305.85 L60.60 305.93 L62.60 306.01 L64.60 306.08 L66.60 306.16 L68.60 306.24 L70.60 306.32 L72.60 306.39 L74.60 306.47 L76.60 306.55 L78.60 306.62 L80.60 306.70 L82.60 306.78 L84.60 306.85 L86.60 306.93 L88.60 307.01 L90.60 307.08 L92.60 307.16 L94.60 307.24 L96.60 307.31 L98.60 307.39 L100.60 307.47 L102.60 307.54 L104.60 307.62 L106.60 307.70 L108.60 307.77 L110.60 307.85 L112.60 307.92 L114.60 308.00 L116.60 308.07 L118.60 308.14 L120.60 308.22 L122.60 308.29 L124.60 308.36 L126.60 308.43 L128.60 308.50 L130.60 308.57 L132.60 308.64 L134.60 308.71 L136.60 308.77 L138.60 308.84 L140.60 308.91 L142.60 308.97 L144.60 309.04 L146.60 309.10 L148.60 309.16 L150.60 309.22 L152.60 309.29 L154.60 309.35 L156.60 309.41 L158.60 309.47 L160.60 309.54 L162.60 309.60 L164.60 309.66 L166.60 309.72 L168.60 309.78 L170.60 309.84 L172.60 309.90 L174.60 309.96 L176.60 310.03 L178.60 310.09 L180.60 310.15 L182.60 310.21 L184.60 310.27 L186.60 310.34 L188.60 310.40 L190.60 310.46 L192.60 310.53 L194.60 310.59 L196.60 310.66 L198.60 310.73 L200.60 310.80 L202.60 310.87 L204.60 310.94 L206.60 311.02 L208.60 311.09 L210.60 311.17 L212.60 311.25 L214.60 311.33 L216.60 311.42 L218.60 311.50 L220.60 311.59 L222.60 311.67 L224.60 311.76 L226.60 311.85 L228.60 311.94 L230.60 312.02 L232.60 312.11 L234.60 312.19 L236.60 312.27 L238.60 312.35 L240.60 312.43 L242.60 312.50 L244.60 312.58 L246.60 312.64 L248.60 312.71 L250.60 312.77 L252.60 312.83 L254.60 312.89 L256.60 312.94 L258.60 312.99 L260.60 313.03 L262.60 313.07 L264.60 313.10 L266.60 313.14 L268.60 313.16 L270.60 313.18 L272.60 313.19 L274.60 313.20 L276.60 313.20 L278.60 313.20 L280.60 313.19 L282.60 313.17 L284.60 313.14 L286.60 313.11 L288.60 313.07 L290.60 313.03 L292.60 312.97 L294.60 312.92 L296.60 312.86 L298.60 312.79 L300.60 312.72 L302.60 312.65 L304.60 312.58 L306.60 312.50 L308.60 312.43 L310.60 312.35 L312.60 312.27 L314.60 312.19 L316.60 312.11 L318.60 312.04 L320.60 311.96 L322.60 311.88 L324.60 311.81 L326.60 311.74 L328.60 311.67 L330.60 311.60 L332.60 311.54 L334.60 311.47 L336.60 311.41 L338.60 311.35 L340.60 311.29 L342.60 311.24 L344.60 311.18 L346.60 311.13 L348.60 311.08 L350.60 311.02 L352.60 310.97 L354.60 310.92 L356.60 310.87 L358.60 310.82 L360.60 310.78 L362.60 310.73 L364.60 310.68 L366.60 310.63 L368.60 310.58 L370.60 310.54 L372.60 310.49 L374.60 310.44 L376.60 310.39 L378.60 310.34 L380.60 310.29 L382.60 310.25 L384.60 310.20 L386.60 310.15 L388.60 310.09 L390.60 310.04 L392.60 309.99 L394.60 309.93 L396.60 309.88 L398.60 309.82 L400.60 309.76 L402.60 309.69 L404.60 309.63 L406.60 309.56 L408.60 309.49 L410.60 309.42 L412.60 309.35 L414.60 309.27 L416.60 309.19 L418.60 309.11 L420.60 309.03 L422.60 308.94 L424.60 308.85 L426.60 308.76 L428.60 308.67 L430.60 308.58 L432.60 308.49 L434.60 308.39 L436.60 308.30 L438.60 308.20 L440.60 308.11 L442.60 308.01 L444.60 307.91 L446.60 307.82 L448.60 307.72 L450.60 307.62 L452.60 307.52 L454.60 307.43 L456.60 307.33 L458.60 307.23 L460.60 307.14 L462.60 307.04 L464.60 306.95 L466.60 306.86 L468.60 306.76 L470.60 306.67 L472.60 306.58 L474.60 306.50 L476.60 306.41 L478.60 306.33 L480.60 306.25 L482.60 306.17 L484.60 306.10 L486.60 306.03 L488.60 305.96 L490.60 305.90 L492.60 305.84 L494.60 305.78 L496.60 305.73 L498.60 305.68 L500.60 305.64 L502.60 305.59 L504.60 305.55 L506.60 305.51 L508.60 305.47 L510.60 305.44 L512.60 305.41 L514.60 305.37 L516.60 305.34 L518.60 305.31 L520.60 305.28 L522.60 305.25 L524.60 305.23 L526.60 305.20 L528.60 305.17 L530.60 305.14 L532.60 305.11 L534.60 305.09 L536.60 305.06 L538.60 305.03 L540.60 305.00 L542.60 304.97 L544.60 304.94 L546.60 304.91 L548.60 304.88 L550.60 304.85 L552.60 304.82 L554.60 304.78 L556.60 304.75 L558.60 304.71 L560.60 304.67 L562.60 304.63 L564.60 304.59 L566.60 304.55 L568.60 304.50 L570.60 304.45 L572.60 304.40 L574.60 304.35 L576.60 304.29 L578.60 304.24 L580.60 304.18 L582.60 304.12 L584.60 304.06 L586.60 303.99 L588.60 303.93 L590.60 303.87 L592.60 303.80 L594.60 303.73 L596.60 303.66 L598.60 303.60 L600.60 303.53 L602.60 303.46 L604.60 303.39 L606.60 303.32 L608.60 303.25 L610.60 303.18 L612.60 303.11 L614.60 303.04 L616.60 302.97 L618.60 302.90 L620.60 302.83 L622.60 302.76 L624.60 302.69 L626.60 302.62 L628.60 302.54 L630.60 302.47 L632.60 302.40 L634.60 302.33 L636.60 302.26 L638.60 302.18 L640.60 302.11 L642.60 302.04 L644.60 301.96 L646.60 301.89 L648.60 301.81 L650.60 301.73 L652.60 301.66 L654.60 301.58 L656.60 301.50 L658.60 301.42 L660.60 301.34 L662.60 301.26 L664.60 301.18 L666.60 301.09 L668.60 301.01 L670.60 300.93 L672.60 300.84 L674.60 300.76 L676.60 300.68 L678.60 300.59 L680.60 300.51 L682.60 300.42 L684.60 300.34 L686.60 300.25 L688.60 300.16 L690.60 300.08 L692.60 299.99 L694.60 299.90 L696.60 299.82 L698.60 299.73 L700.60 299.64 L702.60 299.56 L704.60 299.47 L706.60 299.38 L708.60 299.29 L710.60 299.21 L712.60 299.12 L714.60 299.03 L716.60 298.94 L718.60 298.86 L720.60 298.77 L722.60 298.68 L724.60 298.59 L726.60 298.50 L728.60 298.42 L730.60 298.33 L732.60 298.24 L734.60 298.15 L736.60 298.06 L738.60 297.98 L740.60 297.89 L742.60 297.80 L744.60 297.71 L746.60 297.62 L748.60 297.52 L750.60 297.43 L752.60 297.34 L754.60 297.24 L756.60 297.14 L758.60 297.05 L760.60 296.94 L762.60 296.84 L764.60 296.73 L766.60 296.63 L768.60 296.51 L770.60 296.40 L772.60 296.28 L774.60 296.16 L776.60 296.04 L778.60 295.92 L780.60 295.79 L782.60 295.66 L784.60 295.52 L786.60 295.39 L788.60 295.25 L790.60 295.11 L792.60 294.97 L794.60 294.83 L796.60 294.69 L798.60 294.54 L800.60 294.40 L802.60 294.25 L804.60 294.10 L806.60 293.95 L808.60 293.81 L810.60 293.66 L812.60 293.51 L814.60 293.36 L816.60 293.21 L818.60 293.06 L820.60 292.91 L822.60 292.76 L824.60 292.61 L826.60 292.46 L828.60 292.30 L830.60 292.15 L832.60 292.00 L834.60 291.85 L836.60 291.70 L838.60 291.55 L840.60 291.40 L842.60 291.25 L844.60 291.10 L846.60 290.95 L848.60 290.80 L850.60 290.65 L852.60 290.50 L854.60 290.35 L856.60 290.19 L858.60 290.04 L860.60 289.89 L862.60 289.74 L864.60 289.59 L866.60 289.44 L868.60 289.29 L870.60 289.14 L872.60 288.99 L874.60 288.84 L876.60 288.69 L878.60 288.54 L880.60 288.39 L882.60 288.24 L884.60 288.09 L886.60 287.93 L888.60 287.78 L890.60 287.63 L892.60 287.48 L894.60 287.33 L896.60 287.18" fill="none" stroke="#2fe02f" stroke-width="1.4"/>
<path d="M8.50 308.77 L10.50 309.43 L12.50 310.09 L14.50 310.75 L16.50 311.42 L18.50 312.08 L20.50 312.75 L22.50 313.43 L24.50 314.12 L26.50 314.82 L28.50 315.53 L30.50 316.25 L32.50 317.00 L34.50 317.75 L36.50 318.51 L38.50 319.29 L40.50 320.06 L42.50 320.84 L44.50 321.61 L46.50 322.38 L48.50 323.14 L50.50 323.90 L52.50 324.65 L54.50 325.40 L56.50 326.15 L58.50 326.90 L60.50 327.65 L62.50 328.40 L64.50 329.15 L66.50 329.90 L68.50 330.66 L70.50 331.43 L72.50 332.21 L74.50 333.01 L76.50 333.83 L78.50 334.68 L80.50 335.56 L82.50 336.47 L84.50 337.41 L86.50 338.39 L88.50 339.39 L90.50 340.42 L92.50 341.47 L94.50 342.53 L96.50 343.60 L98.50 344.68 L100.50 345.76 L102.50 346.84 L104.50 347.92 L106.50 349.00 L108.50 350.07 L110.50 351.13 L112.50 352.18 L114.50 353.23 L116.50 354.26 L118.50 355.28 L120.50 356.27 L122.50 357.25 L124.50 358.19 L126.50 359.10 L128.50 359.97 L130.50 360.79 L132.50 361.57 L134.50 362.30 L136.50 363.00 L138.50 363.66 L140.50 364.29 L142.50 364.90 L144.50 365.49 L146.50 366.07 L148.50 366.65 L150.50 367.21 L152.50 367.77 L154.50 368.32 L156.50 368.87 L158.50 369.41 L160.50 369.94 L162.50 370.46 L164.50 370.97 L166.50 371.47 L168.50 371.94 L170.50 372.39 L172.50 372.82 L174.50 373.22 L176.50 373.59 L178.50 373.94 L180.50 374.26 L182.50 374.56 L184.50 374.82 L186.50 375.06 L188.50 375.27 L190.50 375.45 L192.50 375.61 L194.50 375.75 L196.50 375.88 L198.50 375.99 L200.50 376.08 L202.50 376.16 L204.50 376.23 L206.50 376.28 L208.50 376.31 L210.50 376.31 L212.50 376.29 L214.50 376.24 L216.50 376.17 L218.50 376.07 L220.50 375.96 L222.50 375.83 L224.50 375.70 L226.50 375.56 L228.50 375.42 L230.50 375.28 L232.50 375.15 L234.50 375.02 L236.50 374.91 L238.50 374.81 L240.50 374.73 L242.50 374.66 L244.50 374.61 L246.50 374.57 L248.50 374.54 L250.50 374.53 L252.50 374.52 L254.50 374.52 L256.50 374.53 L258.50 374.55 L260.50 374.58 L262.50 374.62 L264.50 374.68 L266.50 374.76 L268.50 374.86 L270.50 374.97 L272.50 375.11 L274.50 375.27 L276.50 375.44 L278.50 375.62 L280.50 375.80 L282.50 375.98 L284.50 376.15 L286.50 376.32 L288.50 376.47 L290.50 376.59 L292.50 376.70 L294.50 376.77 L296.50 376.80 L298.50 376.79 L300.50 376.73 L302.50 376.61 L304.50 376.42 L306.50 376.16 L308.50 375.82 L310.50 375.41 L312.50 374.92 L314.50 374.38 L316.50 373.78 L318.50 373.15 L320.50 372.50 L322.50 371.85 L324.50 371.20 L326.50 370.57 L328.50 369.97 L330.50 369.39 L332.50 368.85 L334.50 368.34 L336.50 367.85 L338.50 367.39 L340.50 366.95 L342.50 366.52 L344.50 366.09 L346.50 365.67 L348.50 365.24 L350.50 364.80 L352.50 364.36 L354.50 363.90 L356.50 363.42 L358.50 362.94 L360.50 362.44 L362.50 361.93 L364.50 361.40 L366.50 360.87 L368.50 360.33 L370.50 359.79 L372.50 359.23 L374.50 358.67 L376.50 358.10 L378.50 357.52 L380.50 356.93 L382.50 356.33 L384.50 355.73 L386.50 355.12 L388.50 354.50 L390.50 353.89 L392.50 353.27 L394.50 352.65 L396.50 352.03 L398.50 351.41 L400.50 350.79 L402.50 350.19 L404.50 349.59 L406.50 349.00 L408.50 348.42 L410.50 347.85 L412.50 347.29 L414.50 346.75 L416.50 346.22 L418.50 345.69 L420.50 345.18 L422.50 344.67 L424.50 344.18 L426.50 343.69 L428.50 343.20 L430.50 342.74 L432.50 342.28 L434.50 341.84 L436.50 341.41 L438.50 341.00 L440.50 340.60 L442.50 340.21 L444.50 339.83 L446.50 339.46 L448.50 339.09 L450.50 338.73 L452.50 338.37 L454.50 338.01 L456.50 337.65 L458.50 337.30 L460.50 336.95 L462.50 336.60 L464.50 336.26 L466.50 335.92 L468.50 335.58 L470.50 335.24 L472.50 334.90 L474.50 334.57 L476.50 334.24 L478.50 333.92 L480.50 333.60 L482.50 333.29 L484.50 332.99 L486.50 332.70 L488.50 332.43 L490.50 332.17 L492.50 331.92 L494.50 331.69 L496.50 331.47 L498.50 331.26 L500.50 331.06 L502.50 330.87 L504.50 330.68 L506.50 330.49 L508.50 330.30 L510.50 330.12 L512.50 329.93 L514.50 329.75 L516.50 329.56 L518.50 329.37 L520.50 329.18 L522.50 328.99 L524.50 328.79 L526.50 328.58 L528.50 328.38 L530.50 328.16 L532.50 327.95 L534.50 327.72 L536.50 327.50 L538.50 327.26 L540.50 327.02 L542.50 326.76 L544.50 326.49 L546.50 326.20 L548.50 325.89 L550.50 325.57 L552.50 325.22 L554.50 324.86 L556.50 324.50 L558.50 324.12 L560.50 323.74 L562.50 323.36 L564.50 322.99 L566.50 322.62 L568.50 322.26 L570.50 321.90 L572.50 321.54 L574.50 321.18 L576.50 320.82 L578.50 320.45 L580.50 320.07 L582.50 319.68 L584.50 319.26 L586.50 318.81 L588.50 318.33 L590.50 317.82 L592.50 317.27 L594.50 316.70 L596.50 316.09 L598.50 315.45 L600.50 314.80 L602.50 314.13 L604.50 313.44 L606.50 312.75 L608.50 312.05 L610.50 311.35 L612.50 310.63 L614.50 309.91 L616.50 309.19 L618.50 308.46 L620.50 307.73 L622.50 306.99 L624.50 306.25 L626.50 305.52 L628.50 304.78 L630.50 304.04 L632.50 303.31 L634.50 302.59 L636.50 301.87 L638.50 301.15 L640.50 300.44 L642.50 299.73 L644.50 299.02 L646.50 298.32 L648.50 297.62 L650.50 296.92 L652.50 296.22 L654.50 295.52 L656.50 294.81 L658.50 294.10 L660.50 293.39 L662.50 292.66 L664.50 291.93 L666.50 291.17 L668.50 290.39 L670.50 289.58 L672.50 288.74 L674.50 287.87 L676.50 286.98 L678.50 286.05 L680.50 285.11 L682.50 284.15 L684.50 283.17 L686.50 282.19 L688.50 281.19 L690.50 280.20 L692.50 279.20 L694.50 278.21 L696.50 277.22 L698.50 276.24 L700.50 275.27 L702.50 274.32 L704.50 273.38 L706.50 272.47 L708.50 271.59 L710.50 270.74 L712.50 269.91 L714.50 269.12 L716.50 268.35 L718.50 267.60 L720.50 266.86 L722.50 266.14 L724.50 265.43 L726.50 264.72 L728.50 264.02 L730.50 263.31 L732.50 262.60 L734.50 261.89 L736.50 261.17 L738.50 260.44 L740.50 259.70 L742.50 258.93 L744.50 258.15 L746.50 257.34 L748.50 256.50 L750.50 255.64 L752.50 254.75 L754.50 253.85 L756.50 252.92 L758.50 251.98 L760.50 251.02 L762.50 250.06 L764.50 249.08 L766.50 248.09 L768.50 247.10 L770.50 246.09 L772.50 245.07 L774.50 244.05 L776.50 243.02 L778.50 241.99 L780.50 240.95 L782.50 239.93 L784.50 238.91 L786.50 237.91 L788.50 236.94 L790.50 235.98 L792.50 235.05 L794.50 234.15 L796.50 233.27 L798.50 232.41 L800.50 231.57 L802.50 230.74 L804.50 229.93 L806.50 229.13 L808.50 228.33 L810.50 227.53 L812.50 226.74 L814.50 225.95 L816.50 225.17 L818.50 224.38 L820.50 223.60 L822.50 222.82 L824.50 222.04 L826.50 221.26 L828.50 220.48 L830.50 219.70 L832.50 218.93 L834.50 218.16 L836.50 217.41 L838.50 216.66 L840.50 215.92 L842.50 215.19 L844.50 214.48 L846.50 213.78 L848.50 213.09 L850.50 212.41 L852.50 211.73 L854.50 211.06 L856.50 210.40 L858.50 209.73 L860.50 209.07 L862.50 208.41 L864.50 207.74 L866.50 207.07 L868.50 206.40 L870.50 205.71 L872.50 205.02 L874.50 204.32 L876.50 203.59 L878.50 202.85 L880.50 202.08 L882.50 201.27 L884.50 200.43 L886.50 199.56 L888.50 198.66 L890.50 197.74 L892.50 196.78 L894.50 195.81 L896.50 194.83 L898.50 193.84" fill="none" stroke="#2828d8" stroke-width="1.3"/>
<line x1="8.50" y1="351.0" x2="8.50" y2="369.0" stroke="#000" stroke-width="1.15"/>
<rect x="6.10" y="353.50" width="4.8" height="9.70" fill="#33e633" stroke="#000" stroke-width="1.15"/>
<line x1="15.50" y1="341.8" x2="15.50" y2="354.7" stroke="#000" stroke-width="1.15"/>
<rect x="12.50" y="344.70" width="6" height="1.7" fill="#000"/>
<line x1="21.50" y1="344.3" x2="21.50" y2="351.5" stroke="#000" stroke-width="1.15"/>
<rect x="19.10" y="348.65" width="4.8" height="2.00" fill="#33e633" stroke="#000" stroke-width="1.15"/>
<line x1="28.50" y1="334.2" x2="28.50" y2="351.5" stroke="#000" stroke-width="1.15"/>
<rect x="26.10" y="340.40" width="4.8" height="5.90" fill="#33e633" stroke="#000" stroke-width="1.15"/>
<line x1="34.50" y1="340.4" x2="34.50" y2="349.8" stroke="#000" stroke-width="1.15"/>
<rect x="32.10" y="341.50" width="4.8" height="4.50" fill="#f03c3c" stroke="#000" stroke-width="1.15"/>
<line x1="41.50" y1="339.3" x2="41.50" y2="345.5" stroke="#000" stroke-width="1.15"/>
<rect x="38.50" y="341.80" width="6" height="1.7" fill="#000"/>
<line x1="48.50" y1="343.5" x2="48.50" y2="358.2" stroke="#000" stroke-width="1.15"/>
<rect x="46.10" y="343.50" width="4.8" height="14.70" fill="#f03c3c" stroke="#000" stroke-width="1.15"/>
<line x1="54.50" y1="349.3" x2="54.50" y2="355.7" stroke="#000" stroke-width="1.15"/>
<rect x="51.50" y="353.20" width="6" height="1.7" fill="#000"/>
<line x1="61.50" y1="354.4" x2="61.50" y2="363.9" stroke="#000" stroke-width="1.15"/>
<rect x="59.10" y="357.20" width="4.8" height="5.50" fill="#f03c3c" stroke="#000" stroke-width="1.15"/>
<line x1="67.50" y1="363.2" x2="67.50" y2="370.6" stroke="#000" stroke-width="1.15"/>
<rect x="65.10" y="366.40" width="4.8" height="2.20" fill="#f03c3c" stroke="#000" stroke-width="1.15"/>
<line x1="74.50" y1="370.0" x2="74.50" y2="384.5" stroke="#000" stroke-width="1.15"/>
<rect x="72.10" y="374.10" width="4.8" height="5.40" fill="#f03c3c" stroke="#000" stroke-width="1.15"/>
<line x1="80.50" y1="375.0" x2="80.50" y2="396.6" stroke="#000" stroke-width="1.15"/>
<rect x="78.10" y="379.60" width="4.8" height="4.60" fill="#f03c3c" stroke="#000" stroke-width="1.15"/>
<line x1="87.50" y1="381.4" x2="87.50" y2="394.6" stroke="#000" stroke-width="1.15"/>
<rect x="85.10" y="381.40" width="4.8" height="8.20" fill="#f03c3c" stroke="#000" stroke-width="1.15"/>
<line x1="94.50" y1="397.4" x2="94.50" y2="410.6" stroke="#000" stroke-width="1.15"/>
<rect x="91.50" y="398.00" width="6" height="1.7" fill="#000"/>
<line x1="100.50" y1="403.0" x2="100.50" y2="428.6" stroke="#000" stroke-width="1.15"/>
<rect x="98.10" y="406.30" width="4.8" height="17.30" fill="#f03c3c" stroke="#000" stroke-width="1.15"/>
<line x1="107.50" y1="396.4" x2="107.50" y2="442.3" stroke="#000" stroke-width="1.15"/>
<rect x="105.10" y="417.70" width="4.8" height="16.50" fill="#33e633" stroke="#000" stroke-width="1.15"/>
<line x1="113.50" y1="401.4" x2="113.50" y2="417.7" stroke="#000" stroke-width="1.15"/>
<rect x="111.10" y="402.40" width="4.8" height="12.00" fill="#f03c3c" stroke="#000" stroke-width="1.15"/>
<line x1="120.50" y1="410.2" x2="120.50" y2="437.0" stroke="#000" stroke-width="1.15"/>
<rect x="118.10" y="419.60" width="4.8" height="12.80" fill="#f03c3c" stroke="#000" stroke-width="1.15"/>
<line x1="127.50" y1="391.0" x2="127.50" y2="419.6" stroke="#000" stroke-width="1.15"/>
<rect x="125.10" y="397.40" width="4.8" height="16.30" fill="#f03c3c" stroke="#000" stroke-width="1.15"/>
<line x1="133.50" y1="404.5" x2="133.50" y2="415.8" stroke="#000" stroke-width="1.15"/>
<rect x="131.10" y="404.50" width="4.8" height="4.90" fill="#33e633" stroke="#000" stroke-width="1.15"/>
<line x1="140.50" y1="388.2" x2="140.50" y2="397.8" stroke="#000" stroke-width="1.15"/>
<rect x="137.50" y="393.80" width="6" height="1.7" fill="#000"/>
<line x1="146.50" y1="390.3" x2="146.50" y2="398.4" stroke="#000" stroke-width="1.15"/>
<rect x="144.10" y="390.30" width="4.8" height="7.50" fill="#f03c3c" stroke="#000" stroke-width="1.15"/>
<line x1="153.50" y1="378.0" x2="153.50" y2="404.5" stroke="#000" stroke-width="1.15"/>
<rect x="151.10" y="379.40" width="4.8" height="25.10" fill="#33e633" stroke="#000" stroke-width="1.15"/>
<line x1="160.50" y1="383.2" x2="160.50" y2="391.7" stroke="#000" stroke-width="1.15"/>
<rect x="158.10" y="385.00" width="4.8" height="3.50" fill="#f03c3c" stroke="#000" stroke-width="1.15"/>
<line x1="166.50" y1="389.9" x2="166.50" y2="398.0" stroke="#000" stroke-width="1.15"/>
<rect x="164.10" y="391.55" width="4.8" height="2.00" fill="#33e633" stroke="#000" stroke-width="1.15"/>
<line x1="173.50" y1="374.2" x2="173.50" y2="385.5" stroke="#000" stroke-width="1.15"/>
<rect x="171.10" y="378.40" width="4.8" height="7.10" fill="#33e633" stroke="#000" stroke-width="1.15"/>
<line x1="179.50" y1="369.6" x2="179.50" y2="377.8" stroke="#000" stroke-width="1.15"/>
<rect x="177.10" y="370.90" width="4.8" height="3.30" fill="#f03c3c" stroke="#000" stroke-width="1.15"/>
<line x1="186.50" y1="364.2" x2="186.50" y2="374.8" stroke="#000" stroke-width="1.15"/>
<rect x="184.10" y="366.20" width="4.8" height="6.90" fill="#f03c3c" stroke="#000" stroke-width="1.15"/>
<line x1="193.50" y1="364.0" x2="193.50" y2="372.9" stroke="#000" stroke-width="1.15"/>
<rect x="190.50" y="368.80" width="6" height="1.7" fill="#000"/>
<line x1="199.50" y1="361.3" x2="199.50" y2="370.3" stroke="#000" stroke-width="1.15"/>
<rect x="197.10" y="365.40" width="4.8" height="4.90" fill="#f03c3c" stroke="#000" stroke-width="1.15"/>
<line x1="206.50" y1="369.0" x2="206.50" y2="380.6" stroke="#000" stroke-width="1.15"/>
<rect x="204.10" y="368.75" width="4.8" height="2.00" fill="#f03c3c" stroke="#000" stroke-width="1.15"/>
<line x1="212.50" y1="364.0" x2="212.50" y2="367.7" stroke="#000" stroke-width="1.15"/>
<rect x="209.50" y="364.60" width="6" height="1.7" fill="#000"/>
<line x1="219.50" y1="366.2" x2="219.50" y2="376.7" stroke="#000" stroke-width="1.15"/>
<rect x="216.50" y="368.60" width="6" height="1.7" fill="#000"/>
<line x1="225.50" y1="369.0" x2="225.50" y2="377.8" stroke="#000" stroke-width="1.15"/>
<rect x="223.10" y="370.90" width="4.8" height="2.30" fill="#33e633" stroke="#000" stroke-width="1.15"/>
<line x1="232.50" y1="343.2" x2="232.50" y2="355.5" stroke="#000" stroke-width="1.15"/>
<rect x="230.10" y="345.50" width="4.8" height="9.10" fill="#33e633" stroke="#000" stroke-width="1.15"/>
<line x1="239.50" y1="336.1" x2="239.50" y2="352.2" stroke="#000" stroke-width="1.15"/>
<rect x="237.10" y="341.70" width="4.8" height="10.50" fill="#f03c3c" stroke="#000" stroke-width="1.15"/>
<line x1="245.50" y1="347.2" x2="245.50" y2="358.7" stroke="#000" stroke-width="1.15"/>
<rect x="242.50" y="350.00" width="6" height="1.7" fill="#000"/>
<line x1="252.50" y1="334.1" x2="252.50" y2="351.3" stroke="#000" stroke-width="1.15"/>
<rect x="250.10" y="345.50" width="4.8" height="5.80" fill="#f03c3c" stroke="#000" stroke-width="1.15"/>
<line x1="258.50" y1="346.6" x2="258.50" y2="352.3" stroke="#000" stroke-width="1.15"/>
<rect x="256.10" y="350.35" width="4.8" height="2.00" fill="#33e633" stroke="#000" stroke-width="1.15"/>
<line x1="265.50" y1="345.9" x2="265.50" y2="353.4" stroke="#000" stroke-width="1.15"/>
<rect x="263.10" y="347.30" width="4.8" height="2.90" fill="#33e633" stroke="#000" stroke-width="1.15"/>
<line x1="272.50" y1="346.3" x2="272.50" y2="354.4" stroke="#000" stroke-width="1.15"/>
<rect x="270.10" y="348.70" width="4.8" height="3.60" fill="#f03c3c" stroke="#000" stroke-width="1.15"/>
<line x1="278.50" y1="347.3" x2="278.50" y2="361.5" stroke="#000" stroke-width="1.15"/>
<rect x="276.10" y="349.40" width="4.8" height="12.10" fill="#f03c3c" stroke="#000" stroke-width="1.15"/>
<line x1="285.50" y1="366.2" x2="285.50" y2="373.8" stroke="#000" stroke-width="1.15"/>
<rect x="282.50" y="369.90" width="6" height="1.7" fill="#000"/>
<line x1="291.50" y1="372.5" x2="291.50" y2="377.8" stroke="#000" stroke-width="1.15"/>
<rect x="289.10" y="372.35" width="4.8" height="2.00" fill="#f03c3c" stroke="#000" stroke-width="1.15"/>
<line x1="298.50" y1="361.1" x2="298.50" y2="374.7" stroke="#000" stroke-width="1.15"/>
<rect x="296.10" y="366.50" width="4.8" height="5.90" fill="#33e633" stroke="#000" stroke-width="1.15"/>
<line x1="305.50" y1="365.3" x2="305.50" y2="376.7" stroke="#000" stroke-width="1.15"/>
<rect x="303.10" y="365.30" width="4.8" height="11.40" fill="#f03c3c" stroke="#000" stroke-width="1.15"/>
<line x1="311.50" y1="320.4" x2="311.50" y2="351.6" stroke="#000" stroke-width="1.15"/>
<rect x="309.10" y="322.20" width="4.8" height="25.10" fill="#33e633" stroke="#000" stroke-width="1.15"/>
<line x1="318.50" y1="283.1" x2="318.50" y2="303.8" stroke="#000" stroke-width="1.15"/>
<rect x="316.10" y="288.50" width="4.8" height="8.10" fill="#f03c3c" stroke="#000" stroke-width="1.15"/>
<line x1="324.50" y1="292.3" x2="324.50" y2="313.6" stroke="#000" stroke-width="1.15"/>
<rect x="322.10" y="300.40" width="4.8" height="10.00" fill="#f03c3c" stroke="#000" stroke-width="1.15"/>
<line x1="331.50" y1="309.6" x2="331.50" y2="318.3" stroke="#000" stroke-width="1.15"/>
<rect x="329.10" y="312.50" width="4.8" height="5.80" fill="#f03c3c" stroke="#000" stroke-width="1.15"/>
<line x1="338.50" y1="317.3" x2="338.50" y2="335.4" stroke="#000" stroke-width="1.15"/>
<rect x="336.10" y="317.30" width="4.8" height="16.30" fill="#f03c3c" stroke="#000" stroke-width="1.15"/>
<line x1="344.50" y1="336.3" x2="344.50" y2="343.6" stroke="#000" stroke-width="1.15"/>
<rect x="342.10" y="337.20" width="4.8" height="3.10" fill="#f03c3c" stroke="#000" stroke-width="1.15"/>
<line x1="351.50" y1="333.9" x2="351.50" y2="348.4" stroke="#000" stroke-width="1.15"/>
<rect x="349.10" y="339.40" width="4.8" height="9.00" fill="#f03c3c" stroke="#000" stroke-width="1.15"/>
<line x1="357.50" y1="323.1" x2="357.50" y2="349.6" stroke="#000" stroke-width="1.15"/>
<rect x="355.10" y="325.20" width="4.8" height="20.00" fill="#33e633" stroke="#000" stroke-width="1.15"/>
<line x1="364.50" y1="319.2" x2="364.50" y2="335.7" stroke="#000" stroke-width="1.15"/>
<rect x="362.10" y="320.00" width="4.8" height="12.40" fill="#f03c3c" stroke="#000" stroke-width="1.15"/>
<line x1="370.50" y1="324.1" x2="370.50" y2="337.4" stroke="#000" stroke-width="1.15"/>
<rect x="368.10" y="331.00" width="4.8" height="3.30" fill="#f03c3c" stroke="#000" stroke-width="1.15"/>
<line x1="377.50" y1="330.1" x2="377.50" y2="335.4" stroke="#000" stroke-width="1.15"/>
<rect x="374.50" y="333.70" width="6" height="1.7" fill="#000"/>
<line x1="384.50" y1="310.4" x2="384.50" y2="329.3" stroke="#000" stroke-width="1.15"/>
<rect x="382.10" y="310.40" width="4.8" height="18.90" fill="#33e633" stroke="#000" stroke-width="1.15"/>
<line x1="390.50" y1="309.9" x2="390.50" y2="329.3" stroke="#000" stroke-width="1.15"/>
<rect x="388.10" y="317.30" width="4.8" height="12.00" fill="#f03c3c" stroke="#000" stroke-width="1.15"/>
<line x1="397.50" y1="316.2" x2="397.50" y2="330.5" stroke="#000" stroke-width="1.15"/>
<rect x="394.50" y="325.00" width="6" height="1.7" fill="#000"/>
<line x1="403.50" y1="324.2" x2="403.50" y2="335.5" stroke="#000" stroke-width="1.15"/>
<rect x="401.10" y="328.50" width="4.8" height="3.80" fill="#f03c3c" stroke="#000" stroke-width="1.15"/>
<line x1="410.50" y1="332.8" x2="410.50" y2="341.7" stroke="#000" stroke-width="1.15"/>
<rect x="408.10" y="332.60" width="4.8" height="2.00" fill="#33e633" stroke="#000" stroke-width="1.15"/>
<line x1="417.50" y1="301.1" x2="417.50" y2="325.6" stroke="#000" stroke-width="1.15"/>
<rect x="415.10" y="313.40" width="4.8" height="12.20" fill="#33e633" stroke="#000" stroke-width="1.15"/>
<line x1="423.50" y1="309.2" x2="423.50" y2="321.2" stroke="#000" stroke-width="1.15"/>
<rect x="421.10" y="311.30" width="4.8" height="9.90" fill="#f03c3c" stroke="#000" stroke-width="1.15"/>
<line x1="430.50" y1="312.2" x2="430.50" y2="319.4" stroke="#000" stroke-width="1.15"/>
<rect x="428.10" y="315.50" width="4.8" height="2.00" fill="#33e633" stroke="#000" stroke-width="1.15"/>
<line x1="436.50" y1="312.2" x2="436.50" y2="319.4" stroke="#000" stroke-width="1.15"/>
<rect x="434.10" y="316.00" width="4.8" height="3.40" fill="#f03c3c" stroke="#000" stroke-width="1.15"/>
<line x1="443.50" y1="313.6" x2="443.50" y2="325.5" stroke="#000" stroke-width="1.15"/>
<rect x="441.10" y="313.60" width="4.8" height="7.00" fill="#f03c3c" stroke="#000" stroke-width="1.15"/>
<line x1="450.50" y1="315.4" x2="450.50" y2="325.5" stroke="#000" stroke-width="1.15"/>
<rect x="448.10" y="320.60" width="4.8" height="2.50" fill="#33e633" stroke="#000" stroke-width="1.15"/>
<line x1="456.50" y1="316.5" x2="456.50" y2="326.4" stroke="#000" stroke-width="1.15"/>
<rect x="454.10" y="316.50" width="4.8" height="7.00" fill="#f03c3c" stroke="#000" stroke-width="1.15"/>
<line x1="463.50" y1="314.2" x2="463.50" y2="321.5" stroke="#000" stroke-width="1.15"/>
<rect x="461.10" y="317.70" width="4.8" height="2.70" fill="#f03c3c" stroke="#000" stroke-width="1.15"/>
<line x1="469.50" y1="308.1" x2="469.50" y2="318.5" stroke="#000" stroke-width="1.15"/>
<rect x="467.10" y="310.40" width="4.8" height="7.30" fill="#33e633" stroke="#000" stroke-width="1.15"/>
<line x1="476.50" y1="300.0" x2="476.50" y2="318.5" stroke="#000" stroke-width="1.15"/>
<rect x="474.10" y="311.30" width="4.8" height="2.90" fill="#f03c3c" stroke="#000" stroke-width="1.15"/>
<line x1="482.50" y1="313.6" x2="482.50" y2="321.5" stroke="#000" stroke-width="1.15"/>
<rect x="480.10" y="314.40" width="4.8" height="2.70" fill="#f03c3c" stroke="#000" stroke-width="1.15"/>
<line x1="489.50" y1="313.6" x2="489.50" y2="328.5" stroke="#000" stroke-width="1.15"/>
<rect x="487.10" y="313.60" width="4.8" height="12.80" fill="#f03c3c" stroke="#000" stroke-width="1.15"/>
<line x1="496.50" y1="317.1" x2="496.50" y2="326.4" stroke="#000" stroke-width="1.15"/>
<rect x="494.10" y="320.60" width="4.8" height="5.80" fill="#33e633" stroke="#000" stroke-width="1.15"/>
<line x1="502.50" y1="319.4" x2="502.50" y2="326.4" stroke="#000" stroke-width="1.15"/>
<rect x="500.10" y="321.50" width="4.8" height="2.80" fill="#f03c3c" stroke="#000" stroke-width="1.15"/>
<line x1="509.50" y1="322.3" x2="509.50" y2="327.6" stroke="#000" stroke-width="1.15"/>
<rect x="506.50" y="325.00" width="6" height="1.7" fill="#000"/>
<line x1="515.50" y1="323.5" x2="515.50" y2="332.8" stroke="#000" stroke-width="1.15"/>
<rect x="513.10" y="323.50" width="4.8" height="2.70" fill="#f03c3c" stroke="#000" stroke-width="1.15"/>
<line x1="522.50" y1="322.3" x2="522.50" y2="336.8" stroke="#000" stroke-width="1.15"/>
<rect x="520.10" y="324.70" width="4.8" height="10.70" fill="#f03c3c" stroke="#000" stroke-width="1.15"/>
<line x1="529.50" y1="330.5" x2="529.50" y2="342.6" stroke="#000" stroke-width="1.15"/>
<rect x="527.10" y="333.40" width="4.8" height="9.20" fill="#f03c3c" stroke="#000" stroke-width="1.15"/>
<line x1="535.50" y1="336.3" x2="535.50" y2="345.0" stroke="#000" stroke-width="1.15"/>
<rect x="533.10" y="340.30" width="4.8" height="3.30" fill="#33e633" stroke="#000" stroke-width="1.15"/>
<line x1="542.50" y1="325.2" x2="542.50" y2="341.5" stroke="#000" stroke-width="1.15"/>
<rect x="540.10" y="328.50" width="4.8" height="8.10" fill="#33e633" stroke="#000" stroke-width="1.15"/>
<line x1="548.50" y1="318.3" x2="548.50" y2="329.6" stroke="#000" stroke-width="1.15"/>
<rect x="546.10" y="321.50" width="4.8" height="4.90" fill="#33e633" stroke="#000" stroke-width="1.15"/>
<line x1="555.50" y1="309.6" x2="555.50" y2="316.5" stroke="#000" stroke-width="1.15"/>
<rect x="553.10" y="309.60" width="4.8" height="5.00" fill="#33e633" stroke="#000" stroke-width="1.15"/>
<line x1="562.50" y1="296.2" x2="562.50" y2="310.4" stroke="#000" stroke-width="1.15"/>
<rect x="560.10" y="303.40" width="4.8" height="7.00" fill="#33e633" stroke="#000" stroke-width="1.15"/>
<line x1="568.50" y1="270.1" x2="568.50" y2="294.2" stroke="#000" stroke-width="1.15"/>
<rect x="566.10" y="271.00" width="4.8" height="21.80" fill="#33e633" stroke="#000" stroke-width="1.15"/>
<line x1="575.50" y1="264.1" x2="575.50" y2="274.5" stroke="#000" stroke-width="1.15"/>
<rect x="572.50" y="267.30" width="6" height="1.7" fill="#000"/>
<line x1="581.50" y1="266.2" x2="581.50" y2="279.7" stroke="#000" stroke-width="1.15"/>
<rect x="579.10" y="274.50" width="4.8" height="2.90" fill="#f03c3c" stroke="#000" stroke-width="1.15"/>
<line x1="588.50" y1="271.0" x2="588.50" y2="280.5" stroke="#000" stroke-width="1.15"/>
<rect x="586.10" y="274.50" width="4.8" height="5.20" fill="#33e633" stroke="#000" stroke-width="1.15"/>
<line x1="595.50" y1="260.0" x2="595.50" y2="271.6" stroke="#000" stroke-width="1.15"/>
<rect x="593.10" y="267.60" width="4.8" height="2.90" fill="#33e633" stroke="#000" stroke-width="1.15"/>
<line x1="601.50" y1="254.2" x2="601.50" y2="266.6" stroke="#000" stroke-width="1.15"/>
<rect x="599.10" y="255.00" width="4.8" height="7.30" fill="#33e633" stroke="#000" stroke-width="1.15"/>
<line x1="608.50" y1="253.0" x2="608.50" y2="259.4" stroke="#000" stroke-width="1.15"/>
<rect x="605.50" y="253.80" width="6" height="1.7" fill="#000"/>
<line x1="614.50" y1="246.4" x2="614.50" y2="259.4" stroke="#000" stroke-width="1.15"/>
<rect x="612.10" y="248.40" width="4.8" height="7.80" fill="#f03c3c" stroke="#000" stroke-width="1.15"/>
<line x1="621.50" y1="242.3" x2="621.50" y2="252.7" stroke="#000" stroke-width="1.15"/>
<rect x="619.10" y="245.50" width="4.8" height="5.60" fill="#f03c3c" stroke="#000" stroke-width="1.15"/>
<line x1="627.50" y1="243.2" x2="627.50" y2="258.9" stroke="#000" stroke-width="1.15"/>
<rect x="625.10" y="247.60" width="4.8" height="5.80" fill="#33e633" stroke="#000" stroke-width="1.15"/>
<line x1="634.50" y1="246.1" x2="634.50" y2="254.8" stroke="#000" stroke-width="1.15"/>
<rect x="631.50" y="250.30" width="6" height="1.7" fill="#000"/>
<line x1="641.50" y1="251.6" x2="641.50" y2="271.6" stroke="#000" stroke-width="1.15"/>
<rect x="639.10" y="251.60" width="4.8" height="10.70" fill="#f03c3c" stroke="#000" stroke-width="1.15"/>
<line x1="647.50" y1="246.3" x2="647.50" y2="258.5" stroke="#000" stroke-width="1.15"/>
<rect x="645.10" y="248.60" width="4.8" height="8.80" fill="#33e633" stroke="#000" stroke-width="1.15"/>
<line x1="654.50" y1="227.0" x2="654.50" y2="239.7" stroke="#000" stroke-width="1.15"/>
<rect x="652.10" y="233.60" width="4.8" height="3.00" fill="#33e633" stroke="#000" stroke-width="1.15"/>
<line x1="660.50" y1="223.1" x2="660.50" y2="233.6" stroke="#000" stroke-width="1.15"/>
<rect x="658.10" y="230.45" width="4.8" height="2.00" fill="#f03c3c" stroke="#000" stroke-width="1.15"/>
<line x1="667.50" y1="221.2" x2="667.50" y2="230.5" stroke="#000" stroke-width="1.15"/>
<rect x="665.10" y="224.30" width="4.8" height="6.20" fill="#33e633" stroke="#000" stroke-width="1.15"/>
<line x1="674.50" y1="210.2" x2="674.50" y2="226.6" stroke="#000" stroke-width="1.15"/>
<rect x="672.10" y="215.40" width="4.8" height="8.70" fill="#33e633" stroke="#000" stroke-width="1.15"/>
<line x1="680.50" y1="211.3" x2="680.50" y2="227.6" stroke="#000" stroke-width="1.15"/>
<rect x="678.10" y="212.50" width="4.8" height="13.00" fill="#f03c3c" stroke="#000" stroke-width="1.15"/>
<line x1="687.50" y1="215.0" x2="687.50" y2="221.8" stroke="#000" stroke-width="1.15"/>
<rect x="685.10" y="217.30" width="4.8" height="3.30" fill="#33e633" stroke="#000" stroke-width="1.15"/>
<line x1="693.50" y1="199.1" x2="693.50" y2="214.6" stroke="#000" stroke-width="1.15"/>
<rect x="691.10" y="210.40" width="4.8" height="4.20" fill="#f03c3c" stroke="#000" stroke-width="1.15"/>
<line x1="700.50" y1="204.4" x2="700.50" y2="217.7" stroke="#000" stroke-width="1.15"/>
<rect x="697.50" y="210.50" width="6" height="1.7" fill="#000"/>
<line x1="707.50" y1="208.1" x2="707.50" y2="221.8" stroke="#000" stroke-width="1.15"/>
<rect x="705.10" y="207.85" width="4.8" height="2.00" fill="#f03c3c" stroke="#000" stroke-width="1.15"/>
<line x1="713.50" y1="198.6" x2="713.50" y2="207.6" stroke="#000" stroke-width="1.15"/>
<rect x="711.10" y="200.30" width="4.8" height="6.40" fill="#f03c3c" stroke="#000" stroke-width="1.15"/>
<line x1="720.50" y1="204.4" x2="720.50" y2="228.5" stroke="#000" stroke-width="1.15"/>
<rect x="718.10" y="206.40" width="4.8" height="22.10" fill="#f03c3c" stroke="#000" stroke-width="1.15"/>
<line x1="726.50" y1="228.4" x2="726.50" y2="237.5" stroke="#000" stroke-width="1.15"/>
<rect x="724.10" y="231.55" width="4.8" height="2.00" fill="#f03c3c" stroke="#000" stroke-width="1.15"/>
<line x1="733.50" y1="229.1" x2="733.50" y2="236.8" stroke="#000" stroke-width="1.15"/>
<rect x="731.10" y="228.85" width="4.8" height="2.00" fill="#f03c3c" stroke="#000" stroke-width="1.15"/>
<line x1="739.50" y1="208.2" x2="739.50" y2="225.6" stroke="#000" stroke-width="1.15"/>
<rect x="737.10" y="208.20" width="4.8" height="17.40" fill="#33e633" stroke="#000" stroke-width="1.15"/>
<line x1="746.50" y1="201.0" x2="746.50" y2="209.7" stroke="#000" stroke-width="1.15"/>
<rect x="743.50" y="206.30" width="6" height="1.7" fill="#000"/>
<line x1="753.50" y1="195.0" x2="753.50" y2="210.5" stroke="#000" stroke-width="1.15"/>
<rect x="751.10" y="200.50" width="4.8" height="6.90" fill="#33e633" stroke="#000" stroke-width="1.15"/>
<line x1="759.50" y1="197.0" x2="759.50" y2="205.9" stroke="#000" stroke-width="1.15"/>
<rect x="756.50" y="202.30" width="6" height="1.7" fill="#000"/>
<line x1="766.50" y1="205.4" x2="766.50" y2="209.7" stroke="#000" stroke-width="1.15"/>
<rect x="763.50" y="208.00" width="6" height="1.7" fill="#000"/>
<line x1="772.50" y1="190.0" x2="772.50" y2="207.4" stroke="#000" stroke-width="1.15"/>
<rect x="770.10" y="200.50" width="4.8" height="6.10" fill="#f03c3c" stroke="#000" stroke-width="1.15"/>
<line x1="779.50" y1="202.4" x2="779.50" y2="207.4" stroke="#000" stroke-width="1.15"/>
<rect x="777.10" y="202.40" width="4.8" height="5.00" fill="#f03c3c" stroke="#000" stroke-width="1.15"/>
<line x1="786.50" y1="200.5" x2="786.50" y2="214.7" stroke="#000" stroke-width="1.15"/>
<rect x="784.10" y="202.80" width="4.8" height="2.60" fill="#f03c3c" stroke="#000" stroke-width="1.15"/>
<line x1="792.50" y1="185.0" x2="792.50" y2="200.5" stroke="#000" stroke-width="1.15"/>
<rect x="790.10" y="190.40" width="4.8" height="10.10" fill="#33e633" stroke="#000" stroke-width="1.15"/>
<line x1="799.50" y1="177.3" x2="799.50" y2="191.2" stroke="#000" stroke-width="1.15"/>
<rect x="797.10" y="179.20" width="4.8" height="12.00" fill="#f03c3c" stroke="#000" stroke-width="1.15"/>
<line x1="805.50" y1="185.1" x2="805.50" y2="201.6" stroke="#000" stroke-width="1.15"/>
<rect x="803.10" y="187.40" width="4.8" height="10.10" fill="#f03c3c" stroke="#000" stroke-width="1.15"/>
<line x1="812.50" y1="185.2" x2="812.50" y2="195.5" stroke="#000" stroke-width="1.15"/>
<rect x="810.10" y="186.10" width="4.8" height="6.50" fill="#33e633" stroke="#000" stroke-width="1.15"/>
<line x1="819.50" y1="171.0" x2="819.50" y2="183.3" stroke="#000" stroke-width="1.15"/>
<rect x="817.10" y="178.40" width="4.8" height="4.90" fill="#33e633" stroke="#000" stroke-width="1.15"/>
<line x1="825.50" y1="162.0" x2="825.50" y2="175.6" stroke="#000" stroke-width="1.15"/>
<rect x="823.10" y="163.30" width="4.8" height="10.30" fill="#33e633" stroke="#000" stroke-width="1.15"/>
<line x1="832.50" y1="158.2" x2="832.50" y2="167.6" stroke="#000" stroke-width="1.15"/>
<rect x="830.10" y="161.40" width="4.8" height="5.10" fill="#f03c3c" stroke="#000" stroke-width="1.15"/>
<line x1="838.50" y1="170.1" x2="838.50" y2="180.7" stroke="#000" stroke-width="1.15"/>
<rect x="836.10" y="175.60" width="4.8" height="2.80" fill="#f03c3c" stroke="#000" stroke-width="1.15"/>
<line x1="845.50" y1="173.2" x2="845.50" y2="187.8" stroke="#000" stroke-width="1.15"/>
<rect x="843.10" y="175.30" width="4.8" height="3.10" fill="#f03c3c" stroke="#000" stroke-width="1.15"/>
<line x1="852.50" y1="153.4" x2="852.50" y2="169.8" stroke="#000" stroke-width="1.15"/>
<rect x="850.10" y="154.30" width="4.8" height="13.30" fill="#f03c3c" stroke="#000" stroke-width="1.15"/>
<line x1="858.50" y1="167.2" x2="858.50" y2="176.6" stroke="#000" stroke-width="1.15"/>
<rect x="856.10" y="170.35" width="4.8" height="2.00" fill="#f03c3c" stroke="#000" stroke-width="1.15"/>
<line x1="865.50" y1="166.3" x2="865.50" y2="191.7" stroke="#000" stroke-width="1.15"/>
<rect x="863.10" y="171.40" width="4.8" height="13.20" fill="#f03c3c" stroke="#000" stroke-width="1.15"/>
<line x1="871.50" y1="162.4" x2="871.50" y2="181.7" stroke="#000" stroke-width="1.15"/>
<rect x="869.10" y="167.20" width="4.8" height="4.20" fill="#33e633" stroke="#000" stroke-width="1.15"/>
<line x1="878.50" y1="161.4" x2="878.50" y2="178.8" stroke="#000" stroke-width="1.15"/>
<rect x="876.10" y="162.40" width="4.8" height="4.10" fill="#33e633" stroke="#000" stroke-width="1.15"/>
<line x1="884.50" y1="142.7" x2="884.50" y2="154.7" stroke="#000" stroke-width="1.15"/>
<rect x="882.10" y="144.40" width="4.8" height="8.00" fill="#33e633" stroke="#000" stroke-width="1.15"/>
<line x1="891.50" y1="120.2" x2="891.50" y2="155.6" stroke="#000" stroke-width="1.15"/>
<rect x="889.10" y="130.50" width="4.8" height="9.60" fill="#33e633" stroke="#000" stroke-width="1.15"/>
<line x1="898.50" y1="141.4" x2="898.50" y2="166.8" stroke="#000" stroke-width="1.15"/>
<rect x="896.10" y="141.40" width="4.8" height="7.10" fill="#f03c3c" stroke="#000" stroke-width="1.15"/>
<text x="905.00" y="120.00" font-size="11" font-weight="normal" fill="#111" text-anchor="start">13</text>
<text x="905.00" y="140.00" font-size="11" font-weight="normal" fill="#111" text-anchor="start">12</text>
<text x="905.00" y="161.00" font-size="11" font-weight="normal" fill="#111" text-anchor="start">11</text>
<text x="905.00" y="185.00" font-size="11" font-weight="normal" fill="#111" text-anchor="start">10</text>
<text x="905.00" y="211.00" font-size="11" font-weight="normal" fill="#111" text-anchor="start">9</text>
<text x="905.00" y="240.00" font-size="11" font-weight="normal" fill="#111" text-anchor="start">8</text>
<text x="905.00" y="272.00" font-size="11" font-weight="normal" fill="#111" text-anchor="start">7</text>
<text x="905.00" y="310.00" font-size="11" font-weight="normal" fill="#111" text-anchor="start">6</text>
<text x="905.00" y="355.00" font-size="11" font-weight="normal" fill="#111" text-anchor="start">5</text>
<text x="905.00" y="410.00" font-size="11" font-weight="normal" fill="#111" text-anchor="start">4</text>
<text x="905.00" y="481.00" font-size="11" font-weight="normal" fill="#111" text-anchor="start">3</text>
<text x="11.00" y="480.60" font-size="11.5" font-weight="normal" fill="#a3abb8" text-anchor="start" textLength="94.00" lengthAdjust="spacingAndGlyphs">17.03.25 - 25.09.25</text>
<text x="81.50" y="494.60" font-size="11" font-weight="normal" fill="#111" text-anchor="middle">April</text>
<text x="213.20" y="494.60" font-size="11" font-weight="normal" fill="#111" text-anchor="middle">Mai</text>
<text x="351.60" y="494.60" font-size="11" font-weight="normal" fill="#111" text-anchor="middle">Juni</text>
<text x="489.60" y="494.60" font-size="11" font-weight="normal" fill="#111" text-anchor="middle">Juli</text>
<text x="641.30" y="494.60" font-size="11" font-weight="normal" fill="#111" text-anchor="middle">Aug.</text>
<text x="779.60" y="494.60" font-size="11" font-weight="normal" fill="#111" text-anchor="middle">Sep.</text>
<rect x="6.5" y="506.5" width="7" height="7" fill="#dd6464" stroke="#222" stroke-width="1"/>
<text x="17.80" y="513.60" font-size="11" font-weight="normal" fill="#111" text-anchor="start" textLength="182.80" lengthAdjust="spacingAndGlyphs">Uranium Energy Corp Volumen in Euro</text>
<rect x="5.5" y="519.5" width="896.0" height="79.0" fill="#fff" stroke="#d3d3d3" stroke-width="1"/>
<line x1="5.5" y1="558.5" x2="901.5" y2="558.5" stroke="#dedede" stroke-width="1"/>
<line x1="8.5" y1="519.5" x2="8.5" y2="598.5" stroke="#dedede" stroke-width="1"/>
<line x1="81.5" y1="519.5" x2="81.5" y2="598.5" stroke="#dedede" stroke-width="1"/>
<line x1="213.2" y1="519.5" x2="213.2" y2="598.5" stroke="#dedede" stroke-width="1"/>
<line x1="351.6" y1="519.5" x2="351.6" y2="598.5" stroke="#dedede" stroke-width="1"/>
<line x1="489.6" y1="519.5" x2="489.6" y2="598.5" stroke="#dedede" stroke-width="1"/>
<line x1="641.3" y1="519.5" x2="641.3" y2="598.5" stroke="#dedede" stroke-width="1"/>
<line x1="779.6" y1="519.5" x2="779.6" y2="598.5" stroke="#dedede" stroke-width="1"/>
<rect x="6" y="593.80" width="4" height="4.70" fill="#66d466"/>
<rect x="13" y="590.90" width="4" height="7.60" fill="#66d466"/>
<rect x="19" y="596.80" width="4" height="1.70" fill="#d96262"/>
<rect x="26" y="595.00" width="4" height="3.50" fill="#66d466"/>
<rect x="32" y="595.90" width="4" height="2.60" fill="#d96262"/>
<rect x="39" y="596.80" width="4" height="1.70" fill="#66d466"/>
<rect x="46" y="595.90" width="4" height="2.60" fill="#d96262"/>
<rect x="52" y="595.90" width="4" height="2.60" fill="#66d466"/>
<rect x="59" y="595.00" width="4" height="3.50" fill="#d96262"/>
<rect x="65" y="593.80" width="4" height="4.70" fill="#d96262"/>
<rect x="72" y="595.90" width="4" height="2.60" fill="#d96262"/>
<rect x="78" y="593.00" width="4" height="5.50" fill="#d96262"/>
<rect x="85" y="596.80" width="4" height="1.70" fill="#d96262"/>
<rect x="92" y="591.90" width="4" height="6.60" fill="#d96262"/>
<rect x="98" y="591.90" width="4" height="6.60" fill="#d96262"/>
<rect x="105" y="593.80" width="4" height="4.70" fill="#66d466"/>
<rect x="111" y="589.00" width="4" height="9.50" fill="#66d466"/>
<rect x="118" y="595.90" width="4" height="2.60" fill="#d96262"/>
<rect x="125" y="595.90" width="4" height="2.60" fill="#66d466"/>
<rect x="131" y="596.80" width="4" height="1.70" fill="#66d466"/>
<rect x="138" y="595.90" width="4" height="2.60" fill="#66d466"/>
<rect x="144" y="597.70" width="4" height="0.80" fill="#d96262"/>
<rect x="151" y="593.00" width="4" height="5.50" fill="#66d466"/>
<rect x="158" y="595.90" width="4" height="2.60" fill="#d96262"/>
<rect x="164" y="595.00" width="4" height="3.50" fill="#d96262"/>
<rect x="171" y="596.80" width="4" height="1.70" fill="#66d466"/>
<rect x="177" y="595.90" width="4" height="2.60" fill="#66d466"/>
<rect x="184" y="595.90" width="4" height="2.60" fill="#66d466"/>
<rect x="191" y="595.90" width="4" height="2.60" fill="#66d466"/>
<rect x="197" y="597.70" width="4" height="0.80" fill="#66d466"/>
<rect x="204" y="595.90" width="4" height="2.60" fill="#66d466"/>
<rect x="210" y="597.70" width="4" height="0.80" fill="#66d466"/>
<rect x="217" y="595.00" width="4" height="3.50" fill="#d96262"/>
<rect x="223" y="596.80" width="4" height="1.70" fill="#d96262"/>
<rect x="230" y="589.00" width="4" height="9.50" fill="#66d466"/>
<rect x="237" y="595.90" width="4" height="2.60" fill="#d96262"/>
<rect x="243" y="595.90" width="4" height="2.60" fill="#66d466"/>
<rect x="250" y="593.00" width="4" height="5.50" fill="#d96262"/>
<rect x="256" y="596.80" width="4" height="1.70" fill="#66d466"/>
<rect x="263" y="596.80" width="4" height="1.70" fill="#66d466"/>
<rect x="270" y="596.80" width="4" height="1.70" fill="#d96262"/>
<rect x="276" y="596.80" width="4" height="1.70" fill="#d96262"/>
<rect x="283" y="596.80" width="4" height="1.70" fill="#d96262"/>
<rect x="289" y="595.90" width="4" height="2.60" fill="#d96262"/>
<rect x="296" y="597.70" width="4" height="0.80" fill="#66d466"/>
<rect x="303" y="597.70" width="4" height="0.80" fill="#d96262"/>
<rect x="309" y="580.80" width="4" height="17.70" fill="#66d466"/>
<rect x="316" y="556.00" width="4" height="42.50" fill="#66d466"/>
<rect x="322" y="573.00" width="4" height="25.50" fill="#d96262"/>
<rect x="329" y="588.10" width="4" height="10.40" fill="#d96262"/>
<rect x="336" y="590.00" width="4" height="8.50" fill="#d96262"/>
<rect x="342" y="595.00" width="4" height="3.50" fill="#d96262"/>
<rect x="349" y="590.80" width="4" height="7.70" fill="#d96262"/>
<rect x="355" y="590.00" width="4" height="8.50" fill="#66d466"/>
<rect x="362" y="591.70" width="4" height="6.80" fill="#d96262"/>
<rect x="368" y="590.80" width="4" height="7.70" fill="#d96262"/>
<rect x="375" y="585.10" width="4" height="13.40" fill="#d96262"/>
<rect x="382" y="590.80" width="4" height="7.70" fill="#66d466"/>
<rect x="388" y="586.90" width="4" height="11.60" fill="#d96262"/>
<rect x="395" y="594.10" width="4" height="4.40" fill="#66d466"/>
<rect x="401" y="590.80" width="4" height="7.70" fill="#d96262"/>
<rect x="408" y="585.10" width="4" height="13.40" fill="#66d466"/>
<rect x="415" y="588.90" width="4" height="9.60" fill="#66d466"/>
<rect x="421" y="594.10" width="4" height="4.40" fill="#d96262"/>
<rect x="428" y="595.20" width="4" height="3.30" fill="#66d466"/>
<rect x="434" y="595.90" width="4" height="2.60" fill="#d96262"/>
<rect x="441" y="588.10" width="4" height="10.40" fill="#d96262"/>
<rect x="448" y="588.10" width="4" height="10.40" fill="#d96262"/>
<rect x="454" y="588.90" width="4" height="9.60" fill="#d96262"/>
<rect x="461" y="592.10" width="4" height="6.40" fill="#66d466"/>
<rect x="467" y="592.10" width="4" height="6.40" fill="#66d466"/>
<rect x="474" y="590.80" width="4" height="7.70" fill="#d96262"/>
<rect x="480" y="593.80" width="4" height="4.70" fill="#d96262"/>
<rect x="487" y="592.90" width="4" height="5.60" fill="#d96262"/>
<rect x="494" y="588.90" width="4" height="9.60" fill="#66d466"/>
<rect x="500" y="592.90" width="4" height="5.60" fill="#d96262"/>
<rect x="507" y="596.90" width="4" height="1.60" fill="#d96262"/>
<rect x="513" y="592.90" width="4" height="5.60" fill="#d96262"/>
<rect x="520" y="595.00" width="4" height="3.50" fill="#d96262"/>
<rect x="527" y="588.90" width="4" height="9.60" fill="#d96262"/>
<rect x="533" y="592.90" width="4" height="5.60" fill="#66d466"/>
<rect x="540" y="592.00" width="4" height="6.50" fill="#66d466"/>
<rect x="546" y="593.20" width="4" height="5.30" fill="#66d466"/>
<rect x="553" y="589.10" width="4" height="9.40" fill="#66d466"/>
<rect x="560" y="574.10" width="4" height="24.40" fill="#66d466"/>
<rect x="566" y="537.90" width="4" height="60.60" fill="#66d466"/>
<rect x="573" y="565.10" width="4" height="33.40" fill="#66d466"/>
<rect x="579" y="587.20" width="4" height="11.30" fill="#d96262"/>
<rect x="586" y="580.20" width="4" height="18.30" fill="#66d466"/>
<rect x="593" y="570.00" width="4" height="28.50" fill="#66d466"/>
<rect x="599" y="576.10" width="4" height="22.40" fill="#66d466"/>
<rect x="606" y="591.10" width="4" height="7.40" fill="#66d466"/>
<rect x="612" y="576.90" width="4" height="21.60" fill="#d96262"/>
<rect x="619" y="589.10" width="4" height="9.40" fill="#66d466"/>
<rect x="625" y="578.10" width="4" height="20.40" fill="#66d466"/>
<rect x="632" y="582.00" width="4" height="16.50" fill="#d96262"/>
<rect x="639" y="570.00" width="4" height="28.50" fill="#d96262"/>
<rect x="645" y="589.90" width="4" height="8.60" fill="#66d466"/>
<rect x="652" y="566.00" width="4" height="32.50" fill="#66d466"/>
<rect x="658" y="585.10" width="4" height="13.40" fill="#66d466"/>
<rect x="665" y="585.90" width="4" height="12.60" fill="#66d466"/>
<rect x="672" y="561.10" width="4" height="37.40" fill="#66d466"/>
<rect x="678" y="575.00" width="4" height="23.50" fill="#d96262"/>
<rect x="685" y="584.20" width="4" height="14.30" fill="#66d466"/>
<rect x="691" y="553.00" width="4" height="45.50" fill="#66d466"/>
<rect x="698" y="582.00" width="4" height="16.50" fill="#66d466"/>
<rect x="705" y="589.10" width="4" height="9.40" fill="#66d466"/>
<rect x="711" y="589.10" width="4" height="9.40" fill="#66d466"/>
<rect x="718" y="592.00" width="4" height="6.50" fill="#d96262"/>
<rect x="724" y="589.90" width="4" height="8.60" fill="#d96262"/>
<rect x="731" y="591.10" width="4" height="7.40" fill="#66d466"/>
<rect x="737" y="585.90" width="4" height="12.60" fill="#66d466"/>
<rect x="744" y="584.20" width="4" height="14.30" fill="#66d466"/>
<rect x="751" y="589.10" width="4" height="9.40" fill="#66d466"/>
<rect x="757" y="591.10" width="4" height="7.40" fill="#d96262"/>
<rect x="764" y="592.00" width="4" height="6.50" fill="#d96262"/>
<rect x="770" y="576.90" width="4" height="21.60" fill="#66d466"/>
<rect x="777" y="592.90" width="4" height="5.60" fill="#d96262"/>
<rect x="784" y="585.90" width="4" height="12.60" fill="#66d466"/>
<rect x="790" y="585.90" width="4" height="12.60" fill="#66d466"/>
<rect x="797" y="553.00" width="4" height="45.50" fill="#d96262"/>
<rect x="803" y="582.00" width="4" height="16.50" fill="#d96262"/>
<rect x="810" y="583.00" width="4" height="15.50" fill="#66d466"/>
<rect x="817" y="579.00" width="4" height="19.50" fill="#66d466"/>
<rect x="823" y="562.00" width="4" height="36.50" fill="#66d466"/>
<rect x="830" y="579.10" width="4" height="19.40" fill="#d96262"/>
<rect x="836" y="580.00" width="4" height="18.50" fill="#d96262"/>
<rect x="843" y="579.10" width="4" height="19.40" fill="#66d466"/>
<rect x="850" y="567.10" width="4" height="31.40" fill="#66d466"/>
<rect x="856" y="574.00" width="4" height="24.50" fill="#d96262"/>
<rect x="863" y="552.00" width="4" height="46.50" fill="#d96262"/>
<rect x="869" y="539.10" width="4" height="59.40" fill="#66d466"/>
<rect x="876" y="570.10" width="4" height="28.40" fill="#66d466"/>
<rect x="882" y="571.00" width="4" height="27.50" fill="#66d466"/>
<rect x="889" y="526.20" width="4" height="72.30" fill="#66d466"/>
<rect x="896" y="553.10" width="4" height="45.40" fill="#d96262"/>
<text x="905.00" y="523.50" font-size="11" font-weight="normal" fill="#111" text-anchor="start">4,0M</text>
<text x="905.00" y="562.50" font-size="11" font-weight="normal" fill="#111" text-anchor="start">2,0M</text>
<text x="905.00" y="602.50" font-size="11" font-weight="normal" fill="#111" text-anchor="start">0,0M</text>
<rect x="6.5" y="610.5" width="7" height="7" fill="#0000ee" stroke="#222" stroke-width="1"/>
<text x="17.80" y="617.80" font-size="11" font-weight="normal" fill="#111" text-anchor="start" textLength="107.00" lengthAdjust="spacingAndGlyphs">Momentum (20): 2,454</text>
<rect x="5.5" y="623.5" width="896.0" height="119.0" fill="#fff" stroke="#d3d3d3" stroke-width="1"/>
<line x1="5.5" y1="663.5" x2="901.5" y2="663.5" stroke="#dedede" stroke-width="1"/>
<line x1="5.5" y1="702.5" x2="901.5" y2="702.5" stroke="#dedede" stroke-width="1"/>
<line x1="8.5" y1="623.5" x2="8.5" y2="742.5" stroke="#dedede" stroke-width="1"/>
<line x1="81.5" y1="623.5" x2="81.5" y2="742.5" stroke="#dedede" stroke-width="1"/>
<line x1="213.2" y1="623.5" x2="213.2" y2="742.5" stroke="#dedede" stroke-width="1"/>
<line x1="351.6" y1="623.5" x2="351.6" y2="742.5" stroke="#dedede" stroke-width="1"/>
<line x1="489.6" y1="623.5" x2="489.6" y2="742.5" stroke="#dedede" stroke-width="1"/>
<line x1="641.3" y1="623.5" x2="641.3" y2="742.5" stroke="#dedede" stroke-width="1"/>
<line x1="779.6" y1="623.5" x2="779.6" y2="742.5" stroke="#dedede" stroke-width="1"/>
<path d="M8.50 729.80 L15.09 722.80 L21.68 715.90 L28.27 713.80 L34.86 712.80 L41.45 707.20 L48.04 708.10 L54.63 711.90 L61.22 715.40 L67.81 714.50 L74.40 712.40 L80.99 711.00 L87.58 713.00 L94.17 718.20 L100.76 719.70 L107.35 715.00 L113.94 716.80 L120.53 724.60 L127.12 718.90 L133.71 717.30 L140.30 718.00 L146.89 722.00 L153.48 714.50 L160.07 721.10 L166.66 719.90 L173.25 716.20 L179.84 709.50 L186.43 710.30 L193.02 705.80 L199.61 703.80 L206.20 699.10 L212.79 695.60 L219.38 695.60 L225.97 692.50 L232.56 675.50 L239.15 679.80 L245.74 680.30 L252.33 675.10 L258.92 680.30 L265.51 682.10 L272.10 686.40 L278.69 689.90 L285.28 699.40 L291.87 697.30 L298.46 693.70 L305.05 701.10 L311.64 681.20 L318.23 669.60 L324.82 676.90 L331.41 680.80 L338.00 687.60 L344.59 692.80 L351.18 694.20 L357.77 684.70 L364.36 697.20 L370.95 695.10 L377.54 696.30 L384.13 684.70 L390.72 693.90 L397.31 693.30 L403.90 694.60 L410.49 690.70 L417.08 678.60 L423.67 680.80 L430.26 680.80 L436.85 679.10 L443.44 701.10 L450.03 714.50 L456.62 709.00 L463.21 703.80 L469.80 692.50 L476.39 690.70 L482.98 689.30 L489.57 703.20 L496.16 697.20 L502.75 698.50 L509.34 698.20 L515.93 709.50 L522.52 705.10 L529.11 710.20 L535.70 705.50 L542.29 700.60 L548.88 706.40 L555.47 697.30 L562.06 697.20 L568.65 678.60 L575.24 676.30 L581.83 681.20 L588.42 678.20 L595.01 675.50 L601.60 673.00 L608.19 671.10 L614.78 671.10 L621.37 663.30 L627.96 663.80 L634.55 664.20 L641.14 670.80 L647.73 662.10 L654.32 648.20 L660.91 644.20 L667.50 640.40 L674.09 639.50 L680.68 649.10 L687.27 649.10 L693.86 650.00 L700.45 664.70 L707.04 664.20 L713.63 657.80 L720.22 674.80 L726.81 682.10 L733.40 686.90 L739.99 672.50 L746.58 670.30 L753.17 668.20 L759.76 673.00 L766.35 674.30 L772.94 666.40 L779.53 674.80 L786.12 682.90 L792.71 673.00 L799.30 678.90 L805.89 689.00 L812.48 674.30 L819.07 673.40 L825.66 662.60 L832.25 666.80 L838.84 680.30 L845.43 681.20 L852.02 656.90 L858.61 656.90 L865.20 669.00 L871.79 670.80 L878.38 666.80 L884.97 656.00 L891.56 640.40 L898.15 654.30" fill="none" stroke="#2b2bee" stroke-width="1.3" stroke-linejoin="round"/>
<text x="905.00" y="627.50" font-size="11" font-weight="normal" fill="#111" text-anchor="start">4</text>
<text x="905.00" y="667.50" font-size="11" font-weight="normal" fill="#111" text-anchor="start">2</text>
<text x="905.00" y="706.50" font-size="11" font-weight="normal" fill="#111" text-anchor="start">0</text>
<text x="903.00" y="746.50" font-size="11" font-weight="normal" fill="#111" text-anchor="start">-2</text>
</svg>
</body></html>
